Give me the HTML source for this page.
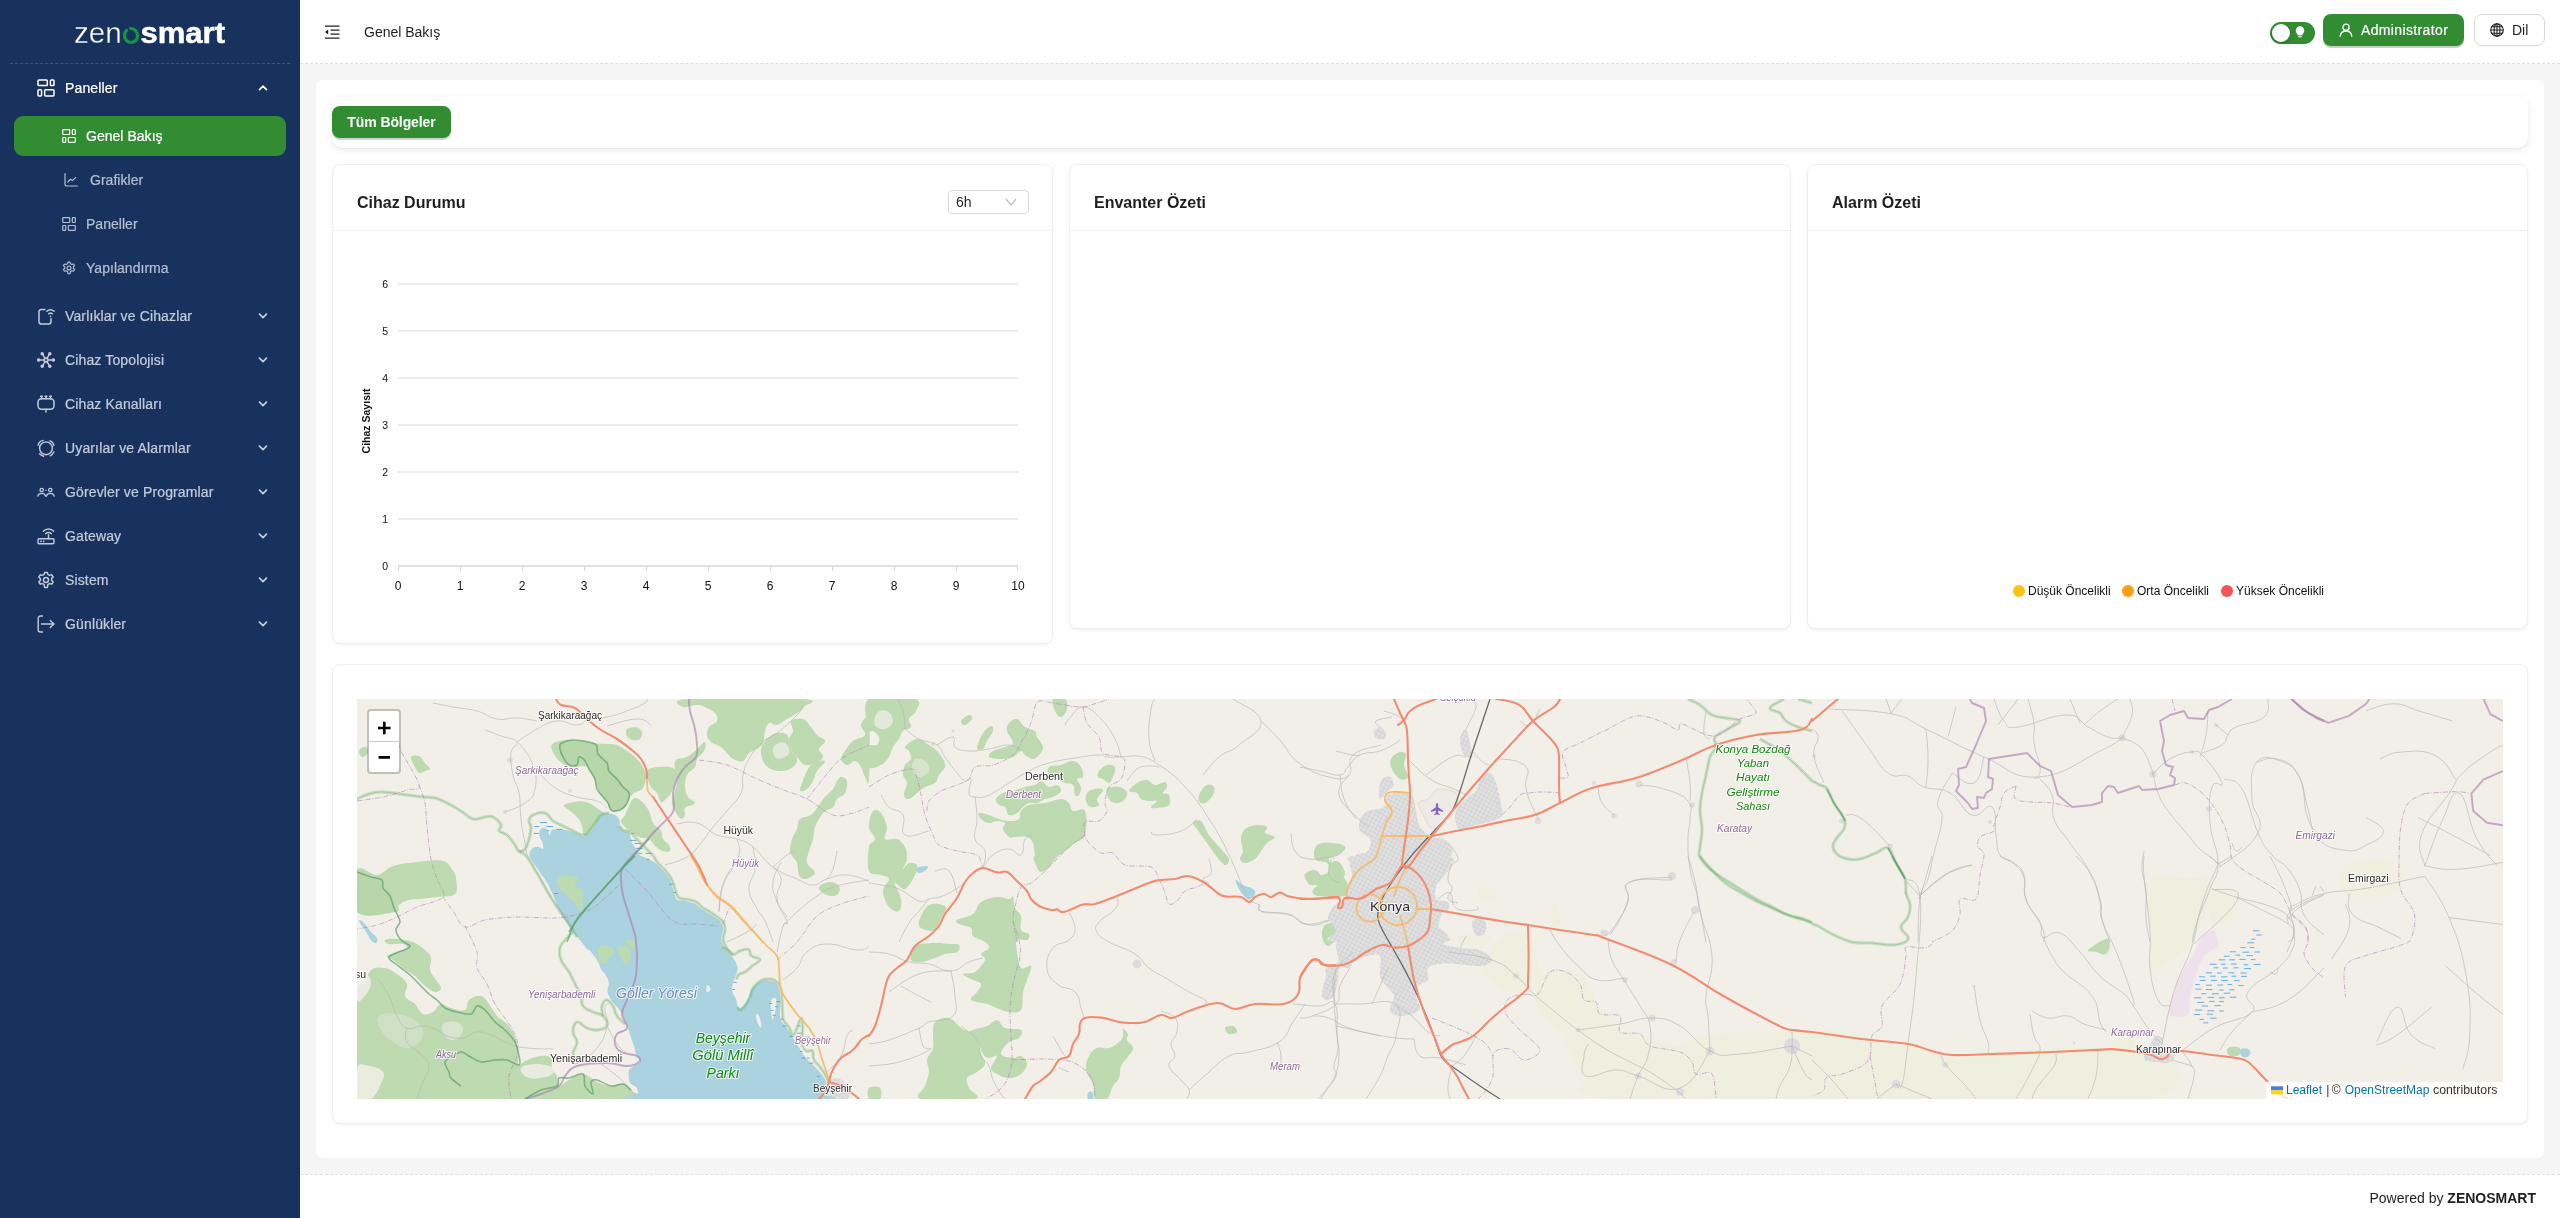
<!DOCTYPE html>
<html lang="tr">
<head>
<meta charset="utf-8">
<title>Genel Bakış</title>
<style>
*{box-sizing:border-box;margin:0;padding:0}
html,body{width:2560px;height:1218px;overflow:hidden;background:#f5f5f5;font-family:"Liberation Sans",sans-serif;color:#1f1f1f;-webkit-font-smoothing:antialiased}
.abs{position:absolute}
/* ---------- sidebar ---------- */
#side{position:absolute;left:0;top:0;width:300px;height:1218px;background:#18325d}
#side .div{position:absolute;left:10px;top:63px;width:280px;height:0;border-top:1px dashed rgba(255,255,255,.16)}
.mi{position:absolute;left:0;width:300px;height:44px;color:#c3cbdb;font-size:14px;line-height:44px;white-space:nowrap}
.mi .tx{position:absolute;left:65px;top:0;letter-spacing:.14px;-webkit-text-stroke:.22px currentColor}
.mi svg.ic{position:absolute;left:37px;top:13px;width:18px;height:18px}
.mi svg.ch{position:absolute;left:258px;top:17px;width:10px;height:10px}
.mi.top1{color:#fff}
.si{position:absolute;left:14px;width:272px;height:40px;border-radius:9px;color:#b5bfd2;font-size:14px;line-height:40px;white-space:nowrap}
.si .tx{position:absolute;left:72px;top:0;letter-spacing:.03px;-webkit-text-stroke:.22px currentColor}
.si svg.ic{position:absolute;left:48px;top:13px;width:14px;height:14px}
.si.act{background:#328c32;color:#fff}
/* ---------- header ---------- */
#hdr{position:absolute;left:300px;top:0;width:2260px;height:64px;background:#fff;border-bottom:1px dashed #dcdcdc}
#ftr{position:absolute;left:300px;top:1174px;width:2260px;height:44px;background:#fff;border-top:1px dashed #e0e0e0}
#content{position:absolute;left:316px;top:80px;width:2228px;height:1078px;background:#fff;border-radius:7px}
.card{position:absolute;background:#fff;border:1px solid #f0f0f0;border-radius:8px;box-shadow:0 1px 2px rgba(0,0,0,.03),0 1px 6px -1px rgba(0,0,0,.02),0 2px 4px rgba(0,0,0,.02)}
.card .hd{position:absolute;left:0;top:0;right:0;height:66px;border-bottom:1px solid #f0f0f0}
.card .tt{position:absolute;left:24px;top:28px;font-size:16px;font-weight:bold;line-height:20px;color:#1f1f1f;white-space:nowrap}
</style>
</head>
<body>
<div id="wrap" style="position:absolute;left:0;top:0;width:2560px;height:1218px;will-change:transform">
<!-- SIDEBAR -->
<div id="side">
  <svg class="abs" style="left:72px;top:18px" width="160" height="32" viewBox="0 0 160 32">
    <text x="2" y="25" font-family="Liberation Sans, sans-serif" font-size="29" fill="#fff" stroke="#18325d" stroke-width=".3" textLength="47.800" lengthAdjust="spacingAndGlyphs">zen</text>
    <ellipse cx="59" cy="17.500" rx="6.500" ry="7" fill="none" stroke="#0c9a42" stroke-width="3.200"/>
    <path d="M54.600 8.500L58.200 14" stroke="#18325d" stroke-width="1.600"/>
    <text x="68.500" y="25" font-family="Liberation Sans, sans-serif" font-size="29" font-weight="bold" fill="#fff" stroke="#fff" stroke-width=".5" textLength="84.500" lengthAdjust="spacingAndGlyphs">smart</text>
  </svg>
  <div class="div"></div>
  <svg width="0" height="0" style="position:absolute">
    <defs>
      <symbol id="i-dash" viewBox="0 0 18 18"><g fill="none" stroke="currentColor" stroke-width="1.500" stroke-linejoin="round"><rect x="1" y="1" width="9.300" height="5.600" rx=".9"/><rect x="13.400" y="1" width="3.600" height="5.600" rx=".9"/><rect x="1" y="10.800" width="3.600" height="6.200" rx=".9"/><rect x="7.700" y="10.800" width="9.300" height="6.200" rx=".9"/></g></symbol>
      <symbol id="i-chd" viewBox="0 0 10 10"><path d="M1.5 3.2 L5 6.6 L8.5 3.2" fill="none" stroke="currentColor" stroke-width="1.7" stroke-linecap="round" stroke-linejoin="round"/></symbol>
      <symbol id="i-chu" viewBox="0 0 10 10"><path d="M1.5 6.6 L5 3.2 L8.5 6.6" fill="none" stroke="currentColor" stroke-width="1.7" stroke-linecap="round" stroke-linejoin="round"/></symbol>
      <symbol id="i-dev" viewBox="0 0 18 18"><g fill="none" stroke="currentColor" stroke-width="1.5" stroke-linecap="round" stroke-linejoin="round"><path d="M8 2.5H4.2A2.2 2.2 0 0 0 2 4.700V14.8A2.2 2.2 0 0 0 4.200 17H11.800A2.2 2.2 0 0 0 14 14.800V11.500"/><path d="M10 4.200A5.5 5.5 0 0 1 17 4.200"/><path d="M11.600 6.800A3 3 0 0 1 15.400 6.800"/><path d="M13.500 9.300V9.400"/></g></symbol>
      <symbol id="i-topo" viewBox="0 0 18 18"><g fill="none" stroke="currentColor" stroke-width="1.4" stroke-linecap="round"><path d="M1.500 9H16.500M5.200 2.600L12.800 15.400M12.800 2.600L5.200 15.400"/></g><g fill="currentColor"><circle cx="1.700" cy="9" r="1.750"/><circle cx="16.300" cy="9" r="1.750"/><circle cx="5.200" cy="2.700" r="1.750"/><circle cx="12.800" cy="2.700" r="1.750"/><circle cx="5.200" cy="15.300" r="1.750"/><circle cx="12.800" cy="15.300" r="1.750"/><circle cx="9" cy="9" r="2.700"/></g><circle cx="9" cy="9" r="1.100" fill="#18325d"/></symbol>
      <symbol id="i-chan" viewBox="0 0 18 18"><g fill="none" stroke="currentColor" stroke-width="1.500" stroke-linecap="round" stroke-linejoin="round"><rect x="1" y="3.800" width="16" height="10.400" rx="3.400"/><path d="M4.500 1.300V3.800M9 1.300V3.800M13.500 1.300V3.800M3.600 1.300H5.400M8.100 1.300H9.900M12.600 1.300H14.400M9 14.200V17"/></g></symbol>
      <symbol id="i-alarm" viewBox="0 0 18 18"><g fill="none" stroke="currentColor" stroke-width="1.400" stroke-linecap="round" stroke-linejoin="round"><circle cx="9" cy="9.300" r="6.400"/><path d="M1.200 6.200A6 6 0 0 1 6 1.400M13 1.800A6 6 0 0 1 16.900 6.500M2.600 14.800A8 8 0 0 0 6.500 17.200M16.800 13A8 8 0 0 1 13.200 16.800"/></g></symbol>
      <symbol id="i-users" viewBox="0 0 18 18"><g fill="none" stroke="currentColor" stroke-width="1.300" stroke-linecap="round" stroke-linejoin="round"><circle cx="4.700" cy="7" r="1.700"/><circle cx="13.300" cy="7" r="1.700"/><path d="M.8 13.200C1.200 11.200 2.700 10.300 4.700 10.300S8.200 11.200 8.600 13.200M9.400 13.200C9.800 11.200 11.300 10.300 13.300 10.300S16.800 11.200 17.200 13.200"/></g><circle cx="9" cy="7.200" r=".8" fill="currentColor"/></symbol>
      <symbol id="i-gw" viewBox="0 0 18 18"><g fill="none" stroke="currentColor" stroke-width="1.400" stroke-linecap="round" stroke-linejoin="round"><rect x="1" y="11.800" width="16" height="5" rx="1.300"/><path d="M11.500 11.800V7.800M6.300 4.300A7 7 0 0 1 16.700 4.300M8.600 6.800A4 4 0 0 1 14.400 6.800"/></g><g fill="currentColor"><circle cx="4" cy="14.300" r=".9"/><circle cx="6.600" cy="14.300" r=".9"/></g></symbol>
      <symbol id="i-gear" viewBox="0 0 18 18"><g fill="none" stroke="currentColor" stroke-width="1.500" stroke-linejoin="round"><path d="M7.600 1H10.400L10.900 3.200L12.600 4.200L14.800 3.500L16.200 5.900L14.600 7.500V9.500L16.200 11.100L14.800 13.500L12.600 12.800L10.900 13.800L10.400 17H7.600L7.100 13.800L5.400 12.800L3.200 13.500L1.800 11.100L3.400 9.500V7.500L1.800 5.900L3.200 3.500L5.400 4.200L7.100 3.200Z" transform="translate(0 0.500) scale(1 .94)"/><circle cx="9" cy="9" r="2.500"/></g></symbol>
      <symbol id="i-log" viewBox="0 0 18 18"><g fill="none" stroke="currentColor" stroke-width="1.400" stroke-linecap="round" stroke-linejoin="round"><path d="M5.500 1H3.500A2.300 2.300 0 0 0 1.200 3.300V14.700A2.300 2.300 0 0 0 3.500 17H5.500M4.500 9H17M13.200 5.600L17 9L13.200 12.400"/></g></symbol>
      <symbol id="i-line" viewBox="0 0 14 14"><g fill="none" stroke="currentColor" stroke-width="1.200" stroke-linecap="round" stroke-linejoin="round"><path d="M1 .6V11A2 2 0 0 0 3 13H13.400M3.800 9L6.500 6.200L8.300 7.600L11.600 4.600"/></g></symbol>
      <symbol id="i-dash14" viewBox="0 0 14 14"><g fill="none" stroke="currentColor" stroke-width="1.200"><rect x=".7" y=".7" width="7" height="4.800" rx=".7"/><rect x="10.300" y=".7" width="3" height="4.800" rx=".7"/><rect x=".7" y="8.500" width="3" height="4.800" rx=".7"/><rect x="6.300" y="8.500" width="7" height="4.800" rx=".7"/></g></symbol>
      <symbol id="i-gear14" viewBox="0 0 18 18"><g fill="none" stroke="currentColor" stroke-width="1.500" stroke-linejoin="round"><path d="M7.600 1H10.400L10.900 3.200L12.600 4.200L14.800 3.500L16.200 5.900L14.600 7.500V9.500L16.200 11.100L14.800 13.500L12.600 12.800L10.900 13.800L10.400 17H7.600L7.100 13.800L5.400 12.800L3.200 13.500L1.800 11.100L3.400 9.500V7.500L1.800 5.900L3.200 3.500L5.400 4.200L7.100 3.200Z" transform="translate(0 0.500) scale(1 .94)"/><circle cx="9" cy="9" r="2.500"/></g></symbol>
    </defs>
  </svg>
  <div class="mi top1" style="top:66px"><svg class="ic"><use href="#i-dash"/></svg><span class="tx">Paneller</span><svg class="ch"><use href="#i-chu"/></svg></div>
  <div class="si act" style="top:116px"><svg class="ic"><use href="#i-dash14"/></svg><span class="tx">Genel Bakış</span></div>
  <div class="si" style="top:160px"><svg class="ic" style="left:50px"><use href="#i-line"/></svg><span class="tx" style="left:76px">Grafikler</span></div>
  <div class="si" style="top:204px"><svg class="ic"><use href="#i-dash14"/></svg><span class="tx">Paneller</span></div>
  <div class="si" style="top:248px"><svg class="ic"><use href="#i-gear14"/></svg><span class="tx">Yapılandırma</span></div>
  <div class="mi" style="top:294px"><svg class="ic"><use href="#i-dev"/></svg><span class="tx">Varlıklar ve Cihazlar</span><svg class="ch"><use href="#i-chd"/></svg></div>
  <div class="mi" style="top:338px"><svg class="ic"><use href="#i-topo"/></svg><span class="tx">Cihaz Topolojisi</span><svg class="ch"><use href="#i-chd"/></svg></div>
  <div class="mi" style="top:382px"><svg class="ic"><use href="#i-chan"/></svg><span class="tx">Cihaz Kanalları</span><svg class="ch"><use href="#i-chd"/></svg></div>
  <div class="mi" style="top:426px"><svg class="ic"><use href="#i-alarm"/></svg><span class="tx">Uyarılar ve Alarmlar</span><svg class="ch"><use href="#i-chd"/></svg></div>
  <div class="mi" style="top:470px"><svg class="ic"><use href="#i-users"/></svg><span class="tx">Görevler ve Programlar</span><svg class="ch"><use href="#i-chd"/></svg></div>
  <div class="mi" style="top:514px"><svg class="ic"><use href="#i-gw"/></svg><span class="tx">Gateway</span><svg class="ch"><use href="#i-chd"/></svg></div>
  <div class="mi" style="top:558px"><svg class="ic"><use href="#i-gear"/></svg><span class="tx">Sistem</span><svg class="ch"><use href="#i-chd"/></svg></div>
  <div class="mi" style="top:602px"><svg class="ic"><use href="#i-log"/></svg><span class="tx">Günlükler</span><svg class="ch"><use href="#i-chd"/></svg></div>
</div>

<!-- HEADER -->
<div id="hdr">
  <svg class="abs" style="left:24px;top:24px" width="17" height="16" viewBox="0 0 17 16"><g fill="none" stroke="#1f1f1f" stroke-width="1.25"><path d="M1 2H15.500M6.500 6H15.500M6.500 10H15.500M1 14H15.500"/></g><path d="M1 8L4.200 5.600V10.400Z" fill="#1f1f1f"/></svg>
  <div class="abs" style="left:64px;top:22px;font-size:14px;line-height:20px;color:#1f1f1f;white-space:nowrap">Genel Bakış</div>
  <!-- toggle -->
  <div class="abs" style="left:1970px;top:22px;width:45px;height:22px;border-radius:11px;background:#328c32">
    <div class="abs" style="left:2px;top:2px;width:18px;height:18px;border-radius:9px;background:#fff;box-shadow:0 2px 4px rgba(0,35,11,.2)"></div>
    <svg class="abs" style="left:25px;top:4px" width="10" height="13" viewBox="0 0 10 13"><path d="M5 .3A4.300 4.300 0 0 0 .7 4.600C.7 6.200 1.600 7.300 2.500 8.200V9.300H7.500V8.200C8.400 7.300 9.300 6.200 9.300 4.600A4.300 4.300 0 0 0 5 .3Z" fill="#fff"/><rect x="2.800" y="10.200" width="4.400" height="1.100" rx=".5" fill="#fff"/></svg>
  </div>
  <!-- administrator -->
  <div class="abs" style="left:2023px;top:14px;width:141px;height:32px;border-radius:8px;background:#328c32;box-shadow:0 2px 0 rgba(40,90,40,.28)">
    <svg class="abs" style="left:16px;top:9px" width="14" height="14" viewBox="0 0 14 14"><g fill="none" stroke="#fff" stroke-width="1.300" stroke-linecap="round"><circle cx="7" cy="4.200" r="3.100"/><path d="M1.200 13.200C1.600 10 3.800 8 7 8S12.400 10 12.800 13.200"/></g></svg>
    <div class="abs" style="left:38px;top:6px;font-size:14px;line-height:20px;color:#fff;white-space:nowrap;letter-spacing:.36px;-webkit-text-stroke:.2px #fff">Administrator</div>
  </div>
  <!-- dil -->
  <div class="abs" style="left:2174px;top:14px;width:71px;height:32px;border-radius:8px;background:#fff;border:1px solid #d9d9d9;box-shadow:0 2px 0 rgba(0,0,0,.02)">
    <svg class="abs" style="left:15px;top:8px" width="14" height="14" viewBox="0 0 14 14"><g fill="none" stroke="#1f1f1f" stroke-width="1.100"><circle cx="7" cy="7" r="6.300"/><ellipse cx="7" cy="7" rx="3" ry="6.300"/><path d="M7 .7V13.300M.7 7H13.300M1.500 3.800H12.500M1.500 10.200H12.500"/></g></svg>
    <div class="abs" style="left:37px;top:5px;font-size:14px;line-height:20px;color:#1f1f1f;white-space:nowrap">Dil</div>
  </div>
</div>

<!-- CONTENT -->
<div id="content"></div>
<!-- filter bar -->
<div class="abs" style="left:332px;top:96px;width:2196px;height:52px;border-radius:10px;background:#fff;box-shadow:0 1px 2px rgba(0,0,0,.06),0 2px 8px rgba(0,0,0,.07)"></div>
<div class="abs" style="left:332px;top:106px;width:119px;height:32px;border-radius:8px;background:#328c32;box-shadow:0 2px 0 rgba(0,0,0,.18);color:#fff;font-size:14px;font-weight:bold;line-height:32px;text-align:center;white-space:nowrap;letter-spacing:-.1px">Tüm Bölgeler</div>

<!-- card 1 -->
<div class="card" style="left:332px;top:164px;width:721px;height:480px">
  <div class="hd"></div>
  <div class="tt">Cihaz Durumu</div>
  <div class="abs" style="left:615px;top:25px;width:81px;height:24px;border:1px solid #d9d9d9;border-radius:4px;background:#fff">
    <div class="abs" style="left:7px;top:1px;font-size:14px;line-height:20px;color:#1f1f1f">6h</div>
    <svg class="abs" style="left:56px;top:6px" width="12" height="10" viewBox="0 0 12 10"><path d="M1 2L6 8L11 2" fill="none" stroke="#bfbfbf" stroke-width="1.200"/></svg>
  </div>
  <svg class="abs" style="left:0;top:66px" width="719" height="412" viewBox="333 231 719 412" font-family="Liberation Sans, sans-serif">
    <g stroke="#e8e8e8" stroke-width="1.500">
      <path d="M398 284H1018M398 331H1018M398 378H1018M398 425H1018M398 472H1018M398 519H1018"/>
    </g>
    <g stroke="#d9d9d9" stroke-width="1.500">
      <path d="M398 566H1018"/>
      <path d="M398.500 566V571M460.500 566V571M522.500 566V571M584.500 566V571M646.500 566V571M708.500 566V571M770.500 566V571M832.500 566V571M894.500 566V571M956.500 566V571M1017.500 566V571" stroke-width="1"/>
    </g>
    <g font-size="10.500" fill="#111" text-anchor="end">
      <text x="388" y="288">6</text><text x="388" y="335">5</text><text x="388" y="382">4</text><text x="388" y="429">3</text><text x="388" y="476">2</text><text x="388" y="523">1</text><text x="388" y="570">0</text>
    </g>
    <g font-size="12" fill="#111" text-anchor="middle">
      <text x="398" y="590">0</text><text x="460" y="590">1</text><text x="522" y="590">2</text><text x="584" y="590">3</text><text x="646" y="590">4</text><text x="708" y="590">5</text><text x="770" y="590">6</text><text x="832" y="590">7</text><text x="894" y="590">8</text><text x="956" y="590">9</text><text x="1018" y="590">10</text>
    </g>
    <text transform="translate(370 421) rotate(-90)" font-size="10.500" font-weight="bold" fill="#111" text-anchor="middle">Cihaz Sayısıt</text>
  </svg>
</div>

<!-- card 2 -->
<div class="card" style="left:1069px;top:164px;width:722px;height:465px">
  <div class="hd"></div>
  <div class="tt" style="left:24px">Envanter Özeti</div>
</div>

<!-- card 3 -->
<div class="card" style="left:1807px;top:164px;width:721px;height:465px">
  <div class="hd"></div>
  <div class="tt" style="left:24px">Alarm Özeti</div>
  <div class="abs" style="left:205px;top:420px;width:12px;height:12px;border-radius:6px;background:#fcc419"></div>
  <div class="abs" style="left:220px;top:418px;font-size:12px;line-height:16px;color:#111;white-space:nowrap">Düşük Öncelikli</div>
  <div class="abs" style="left:314px;top:420px;width:12px;height:12px;border-radius:6px;background:#ff9f0a"></div>
  <div class="abs" style="left:329px;top:418px;font-size:12px;line-height:16px;color:#111;white-space:nowrap">Orta Öncelikli</div>
  <div class="abs" style="left:413px;top:420px;width:12px;height:12px;border-radius:6px;background:#fa5252"></div>
  <div class="abs" style="left:428px;top:418px;font-size:12px;line-height:16px;color:#111;white-space:nowrap">Yüksek Öncelikli</div>
</div>

<!-- map card -->
<div class="card" style="left:332px;top:664px;width:2196px;height:460px">
  <div id="map" class="abs" style="left:24px;top:34px;width:2146px;height:400px;background:#f2efe9;overflow:hidden">
<svg width="2146" height="400" viewBox="0 0 2146 400" style="position:absolute;left:0;top:0" font-family="Liberation Sans, sans-serif">
<rect width="2146" height="400" fill="#f2efe9"/>
<g fill="#eef0d8" opacity=".5"><path d="M1127,267C1128.2,257.4 1136.2,243 1145,237C1153.8,231 1163.4,230.6 1171,237C1178.6,243.4 1180.6,259.4 1183,269C1185.4,278.6 1187,279.8 1183,285C1179,290.2 1171.8,295 1163,295C1154.2,295 1146.2,290.6 1139,285C1131.8,279.4 1125.8,276.6 1127,267Z"/><path d="M1183,277C1191,270.6 1208.6,269.8 1219,273C1229.4,276.2 1230.2,285.8 1235,293C1239.8,300.2 1237.4,304.2 1243,309C1248.6,313.8 1259,312.2 1263,317C1267,321.8 1271,329 1263,333C1255,337 1235.8,337.8 1223,337C1210.2,336.2 1207.8,335.4 1199,329C1190.2,322.6 1182.2,315.4 1179,305C1175.8,294.6 1175,283.4 1183,277Z"/><path d="M1211,337C1220.6,332.2 1246.6,332.2 1263,333C1279.4,333.8 1281,338.2 1293,341C1305,343.8 1313,347.8 1323,347C1333,346.2 1327,339.8 1343,337C1359,334.2 1380.6,333 1403,333C1425.4,333 1444.6,323.6 1455,337C1465.4,350.4 1496.6,387.4 1455,400C1413.4,412.6 1292.6,404.6 1247,400C1201.4,395.4 1233.4,385.6 1227,377C1220.6,368.4 1218.2,365 1215,357C1211.8,349 1201.4,341.8 1211,337Z"/><path d="M1103,237C1107.8,234.6 1125.4,233.8 1131,235C1136.6,236.2 1135.8,240.6 1131,243C1126.2,245.4 1112.6,248.2 1107,247C1101.4,245.8 1098.2,239.4 1103,237Z"/><path d="M1123,190C1125.8,188 1134.2,188 1137,190C1139.8,192 1139.8,198 1137,200C1134.2,202 1125.8,202 1123,200C1120.2,198 1120.2,192 1123,190Z"/><path d="M1195,205C1196,201 1198.4,201 1200,205C1201.6,209 1204,221 1203,225C1202,229 1196.6,229 1195,225C1193.4,221 1194,209 1195,205Z"/><path d="M1455,335C1474.2,324.2 1523,341.6 1551,346C1579,350.4 1583.4,352.8 1595,357C1606.6,361.2 1606.6,358.4 1609,367C1611.4,375.6 1637.8,393.4 1607,400C1576.2,406.6 1485.4,413 1455,400C1424.6,387 1435.8,345.8 1455,335Z"/><path d="M1609,357C1646.2,347.8 1757.8,345.4 1795,354C1832.2,362.6 1832.2,390.8 1795,400C1757.8,409.2 1646.2,408.6 1609,400C1571.8,391.4 1571.8,366.2 1609,357Z"/><path d="M1791,183C1797.4,171.4 1812.2,179 1825,179C1837.8,179 1850.6,175.4 1855,183C1859.4,190.6 1851,205.4 1847,217C1843,228.6 1841.4,232.2 1835,241C1828.6,249.8 1823,255.4 1815,261C1807,266.6 1799.4,273.8 1795,269C1790.6,264.2 1793.8,254.2 1793,237C1792.2,219.8 1784.6,194.6 1791,183Z"/><path d="M1853,191C1858.2,185.4 1876.6,191.8 1881,197C1885.4,202.2 1880.2,211.4 1875,217C1869.8,222.6 1859.4,230.2 1855,225C1850.6,219.8 1847.8,196.6 1853,191Z"/><path d="M1988.5,166.9C1997.5,160.7 2026.5,158.6 2036.8,163.4C2047.1,168.2 2049.2,184.8 2040.2,191C2031.2,197.2 2002.3,199.2 1992,194.4C1981.7,189.6 1979.5,173.1 1988.5,166.9Z"/><path d="M1757,341C1760.2,338.6 1771,336.4 1775,338C1779,339.6 1780.2,346.6 1777,349C1773.8,351.4 1763,351.6 1759,350C1755,348.4 1753.8,343.4 1757,341Z"/></g>
<g fill="#bddab1"><path d="M195,45.6C197.4,42.5 203.8,41.2 212,41C220.2,40.8 231.6,43.6 240,44.4C248.4,45.2 252.5,44.2 258,45.6C263.5,47 266,49.4 270,52C274,54.6 276.9,56.7 280,60C283.1,63.3 285.4,66.3 287,70C288.6,73.7 289.4,76.3 289,80C288.6,83.7 287.2,87.4 285,90C282.8,92.6 279.4,92.2 277,94C274.6,95.8 273.6,97.2 272,100C270.4,102.8 270.4,106.7 268,109C265.6,111.3 261.8,112 259,112.4C256.2,112.8 254.7,112.7 253,111C251.3,109.3 251.8,106.1 250,103C248.2,99.9 245.2,97.8 243,94C240.8,90.2 240,86.4 238,82C236,77.6 234.2,72.8 232,70C229.8,67.2 228.6,67.4 226,67C223.4,66.6 221.3,68.2 218,68C214.7,67.8 211.5,67.8 208,66C204.5,64.2 201.4,61.7 199,58C196.6,54.3 192.6,48.7 195,45.6Z"/><path d="M270,30C271.8,28.4 277.2,27.8 280,28.4C282.8,28.9 284.4,30.9 285,33C285.6,35.1 284.6,38.5 283,40C281.4,41.5 278.4,41.5 276,41C273.6,40.5 271.1,39 270,37C268.9,35 268.2,31.6 270,30Z"/><path d="M292,70C295.9,67.8 306.9,67.3 312,68C317.1,68.7 318.9,71.1 320,74C321.1,76.9 319.1,80.3 318,84C316.9,87.7 315.6,91.1 314,94C312.4,96.9 310.8,98.3 309,100C307.2,101.7 305.6,104.1 304,103C302.4,101.9 301.8,96.8 300,94C298.2,91.2 295.6,90.6 294,88C292.4,85.4 291.4,83.3 291,80C290.6,76.7 288.1,72.2 292,70Z"/><path d="M348,43C349.3,43.4 348.5,48.9 347,52C345.5,55.1 341.6,57.1 340,60C338.4,62.9 339.8,65.1 338,68C336.2,70.9 331.8,72.3 330,76C328.2,79.7 327.8,84 328,88C328.2,92 329.2,95.1 331,98C332.8,100.9 338.6,102 338,104C337.4,106 329.8,106.8 328,109C326.2,111.2 328.7,114 328,116C327.3,118 325.8,120.7 324,120C322.2,119.3 319.6,114.9 318,112C316.4,109.1 315,107.7 315,104C315,100.3 317.1,96.4 318,92C318.9,87.6 320,84 320,80C320,76 318.2,73.5 318,70C317.8,66.5 316.8,63.2 319,61C321.2,58.8 326.1,60 330,58C333.9,56 336.7,52.8 340,50C343.3,47.2 346.7,42.6 348,43Z"/><path d="M207,106C208.5,104.4 215.4,102.8 220,102.4C224.6,102 227.6,102.2 232,104C236.4,105.8 241.1,110 244,112C246.9,114 249.1,112.8 248,115C246.9,117.2 240.9,120.2 238,124C235.1,127.8 234,133.8 232,136C230,138.2 228.5,138.2 227,136C225.5,133.8 225.7,127.7 224,124C222.3,120.3 220.2,118.4 218,116C215.8,113.6 214,112.8 212,111C210,109.2 205.5,107.6 207,106Z"/><path d="M268,116C270.2,112 273.1,102.6 276,100C278.9,97.4 281.1,99.8 284,102C286.9,104.2 289.8,108 292,112C294.2,116 293.8,120.3 296,124C298.2,127.7 302.2,129.1 304,132C305.8,134.9 304.5,137.4 306,140C307.5,142.6 310.7,143.8 312,146C313.3,148.2 314.1,150.9 313,152C311.9,153.1 308.8,152.9 306,152C303.2,151.1 300.6,149.2 298,147C295.4,144.8 294.9,141.7 292,140C289.1,138.3 285.3,139.5 282,138C278.7,136.5 276.6,133.8 274,132C271.4,130.2 269.8,129.8 268,128C266.2,126.2 264,124.2 264,122C264,119.8 265.8,120 268,116Z"/><path d="M326,8C324.5,6.9 310,1.5 332,0C354,-1.5 424.9,-1.5 446,0C467.1,1.5 448.1,5.4 447,8C445.9,10.6 443.1,11.8 440,14C436.9,16.2 433.7,17.8 430,20C426.3,22.2 423.3,25.3 420,26C416.7,26.7 414.2,22.9 412,24C409.8,25.1 409.1,28.3 408,32C406.9,35.7 407.5,40.7 406,44C404.5,47.3 402.6,48.2 400,50C397.4,51.8 394.6,51.8 392,54C389.4,56.2 388.9,60.9 386,62C383.1,63.1 378.9,61.5 376,60C373.1,58.5 372.2,56.2 370,54C367.8,51.8 366.9,50 364,48C361.1,46 356.6,45.2 354,43C351.4,40.8 350.4,38.8 350,36C349.6,33.2 350.2,30.6 352,28C353.8,25.4 358.9,24.6 360,22C361.1,19.4 360.2,16.6 358,14C355.8,11.4 351.3,9.5 348,8C344.7,6.5 344,6 340,6C336,6 327.5,9.1 326,8Z"/><path d="M434,22C435.8,19.8 442.3,18.9 446,20C449.7,21.1 451.4,25.1 454,28C456.6,30.9 457.4,33.4 460,36C462.6,38.6 467.6,39.4 468,42C468.4,44.6 462.4,47.1 462,50C461.6,52.9 466.7,55.4 466,58C465.3,60.6 461.3,62.5 458,64C454.7,65.5 451.3,67.1 448,66C444.7,64.9 442.6,60.9 440,58C437.4,55.1 435.5,53.3 434,50C432.5,46.7 431.6,43.3 432,40C432.4,36.7 435.6,35.3 436,32C436.4,28.7 432.2,24.2 434,22Z"/><path d="M412,38C414.2,36.5 416.7,34.4 420,34C423.3,33.6 427.4,33.1 430,36C432.6,38.9 432.2,45.6 434,50C435.8,54.4 439.6,56.7 440,60C440.4,63.3 438.6,65.8 436,68C433.4,70.2 430,71.6 426,72C422,72.4 417.7,71.8 414,70C410.3,68.2 407.8,65.7 406,62C404.2,58.3 403.6,53.7 404,50C404.4,46.3 406.5,44.2 408,42C409.5,39.8 409.8,39.5 412,38Z"/><path d="M512,22C510.5,12.1 504.7,23.4 504,26C503.3,28.6 509.5,33.1 508,36C506.5,38.9 499.7,39.1 496,42C492.3,44.9 490.2,48.7 488,52C485.8,55.3 483.6,57.4 484,60C484.4,62.6 487.4,65.6 490,66C492.6,66.4 495.4,61.6 498,62C500.6,62.4 502.2,65.1 504,68C505.8,70.9 506.5,75.8 508,78C509.5,80.2 511.3,90.3 512,80C512.7,69.7 513.5,31.9 512,22Z"/><path d="M468,63C467.6,64.8 462.2,68.5 460,72C457.8,75.5 457.8,78.7 456,82C454.2,85.3 452.4,88.2 450,90C447.6,91.8 443.9,93.1 443,92C442.1,90.9 443.9,87.3 445,84C446.1,80.7 447.4,77.3 449,74C450.6,70.7 451.6,68.2 454,66C456.4,63.8 459.4,62.5 462,62C464.6,61.5 468.4,61.2 468,63Z"/><path d="M484,78C485.8,78 489.3,79.1 490,82C490.7,84.9 489.8,90.7 488,94C486.2,97.3 482.2,97.4 480,100C477.8,102.6 478.2,105.8 476,108C473.8,110.2 470.6,109.8 468,112C465.4,114.2 463.8,117.1 462,120C460.2,122.9 459.1,124.3 458,128C456.9,131.7 457.1,135.6 456,140C454.9,144.4 453.1,147.6 452,152C450.9,156.4 448.9,160 450,164C451.1,168 458.4,171.1 458,174C457.6,176.9 450.9,179.6 448,180C445.1,180.4 443.5,178.9 442,176C440.5,173.1 441.1,167.3 440,164C438.9,160.7 437.3,160.2 436,158C434.7,155.8 433.2,155.3 433,152C432.8,148.7 433.7,144 435,140C436.3,136 438.5,133.7 440,130C441.5,126.3 440.4,122.6 443,120C445.6,117.4 450.5,118.6 454,116C457.5,113.4 459.4,109.3 462,106C464.6,102.7 465.4,100.9 468,98C470.6,95.1 473.8,92.9 476,90C478.2,87.1 478.5,84.2 480,82C481.5,79.8 482.2,78 484,78Z"/><path d="M462,188C463.1,186 468.3,183.2 472,183C475.7,182.8 480.4,184.8 482,187C483.6,189.2 482.5,193.2 481,195C479.5,196.8 476.8,197.2 474,197C471.2,196.8 468.2,195.7 466,194C463.8,192.3 460.9,190 462,188Z"/><path d="M54,58C54.9,56.4 59.4,55.9 62,57C64.6,58.1 66,61.6 68,64C70,66.4 73,68.5 73,70C73,71.5 70,71.3 68,72C66,72.7 64,75.1 62,74C60,72.9 58.5,68.9 57,66C55.5,63.1 53.1,59.6 54,58Z"/><path d="M3,50C4.2,48.7 7.5,47.3 9,48C10.5,48.7 11.6,52.2 11,54C10.4,55.8 7.6,57.8 6,58C4.4,58.2 3,56.5 2.4,55C1.8,53.5 1.8,51.3 3,50Z"/><path d="M0,171C3.7,164.2 13.4,176.7 20,176C26.6,175.3 28.7,169.4 36,167C43.3,164.6 50.8,163.9 60,163C69.2,162.1 79.4,160.3 86,162C92.6,163.7 93.6,168.7 96,172C98.4,175.3 98.6,175.8 99,180C99.4,184.2 101.5,191.7 98,195C94.5,198.3 86.2,197.1 80,198C73.8,198.9 69.1,199.4 64,200C58.9,200.6 56,199.9 52,201C48,202.1 44.6,203.8 42,206C39.4,208.2 45.7,211.7 38,213C30.3,214.3 7,220.7 0,213C-7,205.3 -3.7,177.8 0,171Z"/><path d="M28,241C29.5,240.1 34.9,239.6 40,240C45.1,240.4 50.9,241 56,243C61.1,245 64.7,248.1 68,251C71.3,253.9 73.1,255.3 74,259C74.9,262.7 72.1,267 73,271C73.9,275 77,277.7 79,281C81,284.3 84.2,286.8 84,289C83.8,291.2 80.9,293.4 78,293C75.1,292.6 71.7,289.9 68,287C64.3,284.1 62,280.3 58,277C54,273.7 50,271.9 46,269C42,266.1 38.9,263.2 36,261C33.1,258.8 29.3,258.5 30,257C30.7,255.5 36.3,254.5 40,253C43.7,251.5 48.9,250.5 50,249C51.1,247.5 49.3,245.7 46,245C42.7,244.3 35.3,245.7 32,245C28.7,244.3 26.5,241.9 28,241Z"/><path d="M14,271C17.7,268.1 23.2,268.3 28,269C32.8,269.7 36,272.1 40,275C44,277.9 48.5,281 50,285C51.5,289 46.5,293.3 48,297C49.5,300.7 54.7,301.7 58,305C61.3,308.3 62.7,313.5 66,315C69.3,316.5 72.7,314.8 76,313C79.3,311.2 80.7,305.7 84,305C87.3,304.3 89.6,307.9 94,309C98.4,310.1 104.7,312.5 108,311C111.3,309.5 109.1,303.6 112,301C114.9,298.4 120.3,296.3 124,297C127.7,297.7 129.1,301.3 132,305C134.9,308.7 137.1,313.7 140,317C142.9,320.3 145.1,320.1 148,323C150.9,325.9 153.8,329 156,333C158.2,337 159.1,340.2 160,345C160.9,349.8 160.6,355.1 161,359C161.4,362.9 160.3,365.6 162,366C163.7,366.4 166,362.6 170,361C174,359.4 179.6,357.4 184,357C188.4,356.6 192,356.8 194,359C196,361.2 193.9,365.7 195,369C196.1,372.3 198.7,373.7 200,377C201.3,380.3 199.8,386.3 202,387C204.2,387.7 207.6,383.2 212,381C216.4,378.8 220.9,374.6 226,375C231.1,375.4 235.2,380.8 240,383C244.8,385.2 247.2,386.6 252,387C256.8,387.4 261.6,383.9 266,385C270.4,386.1 273.4,390.2 276,393C278.6,395.8 330.6,398.7 280,400C229.4,401.3 51.3,418.9 0,400C-51.3,381.1 -1.5,318.1 0,297C1.5,275.9 5.4,289.8 8,285C10.6,280.2 10.3,273.9 14,271Z"/><path d="M512,0C520.4,-5.5 549.4,-2.2 558,0C566.6,2.2 560.1,8.3 559,12C557.9,15.7 552.9,17.1 552,20C551.1,22.9 555.1,25.8 554,28C552.9,30.2 548.2,29.8 546,32C543.8,34.2 543.8,37.1 542,40C540.2,42.9 537.8,44.7 536,48C534.2,51.3 534.2,54.7 532,58C529.8,61.3 527.7,64.2 524,66C520.3,67.8 514.2,71.3 512,68C509.8,64.7 510.5,52 512,48C513.5,44 518.2,47.8 520,46C521.8,44.2 522.7,40.6 522,38C521.3,35.4 517.8,33.5 516,32C514.2,30.5 512.7,35.9 512,30C511.3,24.1 503.6,5.5 512,0Z"/><path d="M560,40C564.4,39.6 568.3,43.8 572,46C575.7,48.2 577.4,49.4 580,52C582.6,54.6 584.5,57.1 586,60C587.5,62.9 588.7,65.1 588,68C587.3,70.9 583.8,73.1 582,76C580.2,78.9 580.6,81.8 578,84C575.4,86.2 571.3,86.2 568,88C564.7,89.8 562.9,91.8 560,94C557.1,96.2 554.4,99.6 552,100C549.6,100.4 547.4,98.9 547,96C546.6,93.1 550.2,87.7 550,84C549.8,80.3 546.4,79.3 546,76C545.6,72.7 546.5,68.9 548,66C549.5,63.1 553.3,62.6 554,60C554.7,57.4 553.1,54.2 552,52C550.9,49.8 546.5,50.2 548,48C549.5,45.8 555.6,40.4 560,40Z"/><path d="M604,22C604.7,20.2 610,16.4 612,16C614,15.6 615.7,18.2 615,20C614.3,21.8 610,25.6 608,26C606,26.4 603.3,23.8 604,22Z"/><path d="M620,49C620,46.1 623.4,38 626,34C628.6,30 632.2,27.4 634,27C635.8,26.6 636.7,29.2 636,32C635.3,34.8 631.8,38.7 630,42C628.2,45.3 627.8,48.7 626,50C624.2,51.3 620,51.9 620,49Z"/><path d="M652,24C653.8,21.8 657.1,19.3 660,20C662.9,20.7 664.7,25.8 668,28C671.3,30.2 675.8,30.2 678,32C680.2,33.8 678.5,35.1 680,38C681.5,40.9 685.6,44.7 686,48C686.4,51.3 683.8,53.8 682,56C680.2,58.2 678.6,60 676,60C673.4,60 670.2,57.5 668,56C665.8,54.5 666.2,51.6 664,52C661.8,52.4 659.7,56.5 656,58C652.3,59.5 648.4,60 644,60C639.6,60 633.5,59.5 632,58C630.5,56.5 633.1,53.8 636,52C638.9,50.2 644.3,49.5 648,48C651.7,46.5 655.6,46.9 656,44C656.4,41.1 650.7,35.7 650,32C649.3,28.3 650.2,26.2 652,24Z"/><path d="M696,0C697.8,-2.2 705.4,-1.8 708,0C710.6,1.8 710.7,6.7 710,10C709.3,13.3 706.2,17.6 704,18C701.8,18.4 699.5,15.3 698,12C696.5,8.7 694.2,2.2 696,0Z"/><path d="M664,112C665.8,109.4 667.6,107.5 672,106C676.4,104.5 682.1,105.1 688,104C693.9,102.9 699.6,100 704,100C708.4,100 709.8,101.8 712,104C714.2,106.2 713.1,110.5 716,112C718.9,113.5 725.8,107.6 728,112C730.2,116.4 729.8,130.1 728,136C726.2,141.9 721.7,141.1 718,144C714.3,146.9 711.3,149.4 708,152C704.7,154.6 702.9,155.1 700,158C697.1,160.9 694.6,165.4 692,168C689.4,170.6 687.8,172.4 686,172C684.2,171.6 683.5,168.9 682,166C680.5,163.1 679.1,160 678,156C676.9,152 677.5,147.3 676,144C674.5,140.7 673.3,139.1 670,138C666.7,136.9 661.3,138 658,138C654.7,138 654.2,139.5 652,138C649.8,136.5 646.7,132.6 646,130C645.3,127.4 649.1,125.5 648,124C646.9,122.5 642.9,122 640,122C637.1,122 634.9,124.4 632,124C629.1,123.6 625.8,121.8 624,120C622.2,118.2 620.5,114.7 622,114C623.5,113.3 628.3,114.9 632,116C635.7,117.1 638.3,118.9 642,120C645.7,121.1 648.3,122 652,122C655.7,122 659.8,121.8 662,120C664.2,118.2 662.2,114.6 664,112Z"/><path d="M639,100C639.7,97.8 642.9,95.5 646,94C649.1,92.5 652,93.1 656,92C660,90.9 664,89.1 668,88C672,86.9 675.1,87.1 678,86C680.9,84.9 681.4,81.6 684,82C686.6,82.4 689.1,87.3 692,88C694.9,88.7 697.8,85.3 700,86C702.2,86.7 704.7,89.8 704,92C703.3,94.2 698.9,96.5 696,98C693.1,99.5 690.9,98.9 688,100C685.1,101.1 682.9,103.3 680,104C677.1,104.7 674.6,103.3 672,104C669.4,104.7 668.2,106.2 666,108C663.8,109.8 662.6,112.5 660,114C657.4,115.5 654.2,117.1 652,116C649.8,114.9 649.8,109.8 648,108C646.2,106.2 643.6,107.5 642,106C640.4,104.5 638.3,102.2 639,100Z"/><path d="M692,68C694.2,66.2 699.6,67.1 704,66C708.4,64.9 712.3,61.6 716,62C719.7,62.4 722.2,65.1 724,68C725.8,70.9 726.7,75.8 726,78C725.3,80.2 720.4,78.2 720,80C719.6,81.8 723.6,85.1 724,88C724.4,90.9 723.1,94.5 722,96C720.9,97.5 719.1,97.8 718,96C716.9,94.2 717.8,88.2 716,86C714.2,83.8 710.9,85.1 708,84C705.1,82.9 702.9,81.5 700,80C697.1,78.5 693.5,78.2 692,76C690.5,73.8 689.8,69.8 692,68Z"/><path d="M742,72C743.6,69.8 747.1,66.7 750,66C752.9,65.3 756.9,65.8 758,68C759.1,70.2 757.1,75.1 756,78C754.9,80.9 753.8,83.6 752,84C750.2,84.4 748,81.1 746,80C744,78.9 741.7,79.5 741,78C740.3,76.5 740.4,74.2 742,72Z"/><path d="M730,94C731.6,91.8 735.1,90.5 738,90C740.9,89.5 745.6,89.2 746,91C746.4,92.8 740.7,97.2 740,100C739.3,102.8 743.1,104.5 742,106C740.9,107.5 736.4,108.7 734,108C731.6,107.3 729.7,104.6 729,102C728.3,99.4 728.4,96.2 730,94Z"/><path d="M750,90C751.8,87.8 758.3,87.3 762,88C765.7,88.7 769.3,91.4 770,94C770.7,96.6 768.2,100.2 766,102C763.8,103.8 760.6,104.4 758,104C755.4,103.6 753.5,102.6 752,100C750.5,97.4 748.2,92.2 750,90Z"/><path d="M780,84C783.3,82 786.7,80.6 790,81C793.3,81.4 794.7,85.6 798,86C801.3,86.4 805.8,82.6 808,83C810.2,83.4 810.4,86 810,88C809.6,90 805.6,92.5 806,94C806.4,95.5 810.9,93.8 812,96C813.1,98.2 814.2,103.6 812,106C809.8,108.4 803.3,108.6 800,109C796.7,109.4 794,109.3 794,108C794,106.7 800.4,103.1 800,102C799.6,100.9 794.9,102.4 792,102C789.1,101.6 786.2,101.5 784,100C781.8,98.5 782.2,95.5 780,94C777.8,92.5 772,93.8 772,92C772,90.2 776.7,86 780,84Z"/><path d="M850,86C852.6,84.9 855.9,86.2 857,88C858.1,89.8 857.6,93.1 856,96C854.4,98.9 850.6,102.9 848,104C845.4,105.1 842.9,103.8 842,102C841.1,100.2 841.5,96.9 843,94C844.5,91.1 847.4,87.1 850,86Z"/><path d="M888,130C890.9,127.4 896,126.4 900,126C904,125.6 908.5,126.5 910,128C911.5,129.5 906.5,132.2 908,134C909.5,135.8 917.6,136.2 918,138C918.4,139.8 912.6,141.4 910,144C907.4,146.6 906.2,149.1 904,152C901.8,154.9 900.9,157.8 898,160C895.1,162.2 890.8,164 888,164C885.2,164 883.4,162.2 883,160C882.6,157.8 885.8,155.7 886,152C886.2,148.3 883.6,144 884,140C884.4,136 885.1,132.6 888,130Z"/><path d="M836,124C836.7,122.5 841.1,119.8 844,122C846.9,124.2 848.3,130.9 852,136C855.7,141.1 860.3,145.6 864,150C867.7,154.4 871.3,157.1 872,160C872.7,162.9 870.2,166.4 868,166C865.8,165.6 863.3,162 860,158C856.7,154 853.7,149.1 850,144C846.3,138.9 842.6,133.7 840,130C837.4,126.3 835.3,125.5 836,124Z"/><path d="M516,112C518.2,109.4 521.4,111.1 524,114C526.6,116.9 529.3,123.2 530,128C530.7,132.8 526.2,137.8 528,140C529.8,142.2 536.3,138.5 540,140C543.7,141.5 546.2,144.3 548,148C549.8,151.7 550.4,156 550,160C549.6,164 545.6,169.3 546,170C546.4,170.7 549.4,164.7 552,164C554.6,163.3 558.9,163.8 560,166C561.1,168.2 560.2,171.6 558,176C555.8,180.4 551.7,188.5 548,190C544.3,191.5 538.7,182.2 538,184C537.3,185.8 543.3,194.9 544,200C544.7,205.1 544.2,210.5 542,212C539.8,213.5 534.9,211.7 532,208C529.1,204.3 526,197.1 526,192C526,186.9 532.4,182.9 532,180C531.6,177.1 527.7,177.5 524,176C520.3,174.5 514.2,177.1 512,172C509.8,166.9 510.9,153.9 512,148C513.1,142.1 518,143.7 518,140C518,136.3 512.4,133.1 512,128C511.6,122.9 513.8,114.6 516,112Z"/><path d="M960,146C963.3,143.1 970.9,143.6 976,144C981.1,144.4 986.9,145.8 988,148C989.1,150.2 984.9,153.8 982,156C979.1,158.2 972.7,157.4 972,160C971.3,162.6 975.1,166.3 978,170C980.9,173.7 985.8,176.7 988,180C990.2,183.3 991.8,185.1 990,188C988.2,190.9 983.9,194.5 978,196C972.1,197.5 960.6,197.5 958,196C955.4,194.5 965.1,190.2 964,188C962.9,185.8 954.9,186.2 952,184C949.1,181.8 947.6,178.2 948,176C948.4,173.8 951.1,172 954,172C956.9,172 960.7,176 964,176C967.3,176 970.9,174.2 972,172C973.1,169.8 972.6,166.2 970,164C967.4,161.8 959.8,163.3 958,160C956.2,156.7 956.7,148.9 960,146Z"/><path d="M600,221C602.6,219.2 611.6,218.3 616,215C620.4,211.7 619.6,206.1 624,203C628.4,199.9 634.9,198.6 640,198C645.1,197.4 649.1,200 652,200C654.9,200 654.9,196.3 656,198C657.1,199.7 656.5,205.5 658,209C659.5,212.5 662.9,213 664,217C665.1,221 662.5,227.7 664,231C665.5,234.3 670.9,233.2 672,235C673.1,236.8 672.2,239.9 670,241C667.8,242.1 661.8,238.8 660,241C658.2,243.2 659.3,247.9 660,253C660.7,258.1 661.4,266.4 664,269C666.6,271.6 672.9,264.8 674,267C675.1,269.2 671.5,276.2 670,281C668.5,285.8 667.1,287.5 666,293C664.9,298.5 666.6,307.3 664,311C661.4,314.7 656.4,313.4 652,313C647.6,312.6 644,310.5 640,309C636,307.5 634.8,306.5 630,305C625.2,303.5 615.8,303.2 614,301C612.2,298.8 618.2,295.9 620,293C621.8,290.1 624.7,287.2 624,285C623.3,282.8 619.3,282.8 616,281C612.7,279.2 605.6,276.5 606,275C606.4,273.5 614,275.6 618,273C622,270.4 626.9,264.3 628,261C629.1,257.7 623.3,257.2 624,255C624.7,252.8 631.3,251.2 632,249C632.7,246.8 630.9,245.2 628,243C625.1,240.8 618.6,239.6 616,237C613.4,234.4 616.6,231.2 614,229C611.4,226.8 604.6,226.5 602,225C599.4,223.5 597.4,222.8 600,221Z"/><path d="M558,247C562.4,243.9 571.8,244.4 578,244C584.2,243.6 587.6,244.6 592,245C596.4,245.4 600.5,244.5 602,246C603.5,247.5 602.6,251.3 600,253C597.4,254.7 592,253.9 588,255C584,256.1 582.4,257.5 578,259C573.6,260.5 568.4,262.6 564,263C559.6,263.4 555.1,263.9 554,261C552.9,258.1 553.6,250.1 558,247Z"/><path d="M572,206C577,203.2 586.8,205.6 589,208C591.2,210.4 586,214.8 584,219C582,223.2 581.3,229 578,231C574.7,233 568.9,231.5 566,230C563.1,228.5 560.9,227.4 562,223C563.1,218.6 567,208.8 572,206Z"/><path d="M678,157C681.5,155.3 695.8,155.2 698,157C700.2,158.8 692.6,164.1 690,167C687.4,169.9 686,173.2 684,173C682,172.8 680.1,168.9 679,166C677.9,163.1 674.5,158.7 678,157Z"/><path d="M578,323C580.9,319.7 587.2,317.9 592,319C596.8,320.1 600.3,326.4 604,329C607.7,331.6 609.1,330.8 612,333C614.9,335.2 617.8,337 620,341C622.2,345 622.5,350.6 624,355C625.5,359.4 628.7,361.7 628,365C627.3,368.3 623.3,370.4 620,373C616.7,375.6 611.5,376.1 610,379C608.5,381.9 610.5,385.1 612,389C613.5,392.9 626.8,398 618,400C609.2,402 573.2,402.4 564,400C554.8,397.6 566.5,391.9 568,387C569.5,382.1 571.6,377.8 572,373C572.4,368.2 569.3,365.4 570,361C570.7,356.6 574.9,353.4 576,349C577.1,344.6 575.6,341.8 576,337C576.4,332.2 575.1,326.3 578,323Z"/><path d="M612,333C613.8,330.4 624.9,329.2 630,327C635.1,324.8 636.7,320.6 640,321C643.3,321.4 643.6,327.2 648,329C652.4,330.8 661.4,329.2 664,331C666.6,332.8 664.2,336.8 662,339C659.8,341.2 655.3,340.1 652,343C648.7,345.9 643.3,352.1 644,355C644.7,357.9 652.3,358.6 656,359C659.7,359.4 661.4,355.9 664,357C666.6,358.1 670,361.7 670,365C670,368.3 667.3,372.4 664,375C660.7,377.6 656.4,379 652,379C647.6,379 643.3,376.8 640,375C636.7,373.2 634,372.3 634,369C634,365.7 640.4,358.8 640,357C639.6,355.2 634.6,359.4 632,359C629.4,358.6 628.2,358.3 626,355C623.8,351.7 622.6,345 620,341C617.4,337 610.2,335.6 612,333Z"/><path d="M766,330C766.9,329.6 770.3,333 771,335C771.7,337 769.1,338.4 770,341C770.9,343.6 776,345.7 776,349C776,352.3 772.2,355.7 770,359C767.8,362.3 765.5,363.3 764,367C762.5,370.7 763.5,375.3 762,379C760.5,382.7 758.2,383.1 756,387C753.8,390.9 753.3,397.6 750,400C746.7,402.4 740.6,402.8 738,400C735.4,397.2 737.6,390.3 736,385C734.4,379.7 729.7,376.1 729,371C728.3,365.9 730,361 732,357C734,353 736.3,350.5 740,349C743.7,347.5 748,350.1 752,349C756,347.9 759.4,345.2 762,343C764.6,340.8 765.3,339.4 766,337C766.7,334.6 765.1,330.4 766,330Z"/><path d="M512,389C514,387 521,387 523,389C525,391 525,398 523,400C521,402 514,402 512,400C510,398 510,391 512,389Z"/><path d="M960,187C963.7,185 972.5,185 978,185C983.5,185 988.2,184.8 990,187C991.8,189.2 993.9,195.3 988,197C982.1,198.7 963.1,197.8 958,196C952.9,194.2 956.3,189 960,187Z"/><path d="M948,175C949.5,173.2 955.1,170.3 958,171C960.9,171.7 964,176.4 964,179C964,181.6 960.6,184.6 958,185C955.4,185.4 951.8,182.8 950,181C948.2,179.2 946.5,176.8 948,175Z"/><path d="M974,165C974.4,162.1 979.4,161.2 982,163C984.6,164.8 988.4,172.1 988,175C987.6,177.9 982.6,180.8 980,179C977.4,177.2 973.6,167.9 974,165Z"/><path d="M967,227C969.2,224.1 976,223.2 978,225C980,226.8 979.1,233 978,237C976.9,241 974.2,246.3 972,247C969.8,247.7 966.9,244.7 966,241C965.1,237.3 964.8,229.9 967,227Z"/><path d="M868,329C868.7,327.5 873.8,326.3 876,327C878.2,327.7 880.7,331.5 880,333C879.3,334.5 874.2,335.7 872,335C869.8,334.3 867.3,330.5 868,329Z"/><path d="M949,176C950.5,173.8 956.4,171.3 959,172C961.6,172.7 963.4,177.4 963,180C962.6,182.6 959.2,185.3 957,186C954.8,186.7 952.5,185.8 951,184C949.5,182.2 947.5,178.2 949,176Z"/><path d="M973,164C974.8,162.5 980.6,163.8 983,166C985.4,168.2 986.7,173.4 986,176C985.3,178.6 981.4,180.4 979,180C976.6,179.6 974.1,176.9 973,174C971.9,171.1 971.2,165.5 973,164Z"/><path d="M959,192C961.2,190 969.5,186.7 975,186C980.5,185.3 986.8,186.2 989,188C991.2,189.8 991.8,194.3 987,196C982.2,197.7 968.1,197.7 963,197C957.9,196.3 956.8,194 959,192Z"/><path d="M1034,60C1035.5,56.9 1040.2,53.7 1043,53C1045.8,52.3 1048.3,53.6 1049,56C1049.7,58.4 1046.6,62 1047,66C1047.4,70 1051.7,75.4 1051,78C1050.3,80.6 1045.9,81.5 1043,80C1040.1,78.5 1036.7,73.7 1035,70C1033.3,66.3 1032.5,63.1 1034,60Z"/><path d="M966,230C968,227.2 976,225.6 978,228C980,230.4 979,240.2 977,243C975,245.8 969,245.4 967,243C965,240.6 964,232.8 966,230Z"/><path d="M1731,251C1732.8,248.6 1745,241.1 1749,240C1753,238.9 1753,242.2 1753,245C1753,247.8 1751.6,253.5 1749,255C1746.4,256.5 1742.3,253.7 1739,253C1735.7,252.3 1729.2,253.4 1731,251Z"/><path d="M1871,349C1872.8,347.6 1880,347.3 1882,348.6C1884,349.9 1883.8,354.6 1882,356C1880.2,357.4 1874,357.7 1872,356.4C1870,355.1 1869.2,350.4 1871,349Z"/></g>
<g fill="#9fcb98" opacity=".2"><path d="M0,173C2.6,166.6 9.4,176.5 14,178C18.6,179.5 22.8,179 25,181C27.2,183 24.5,186.1 26,189C27.5,191.9 31,193.3 33,197C35,200.7 36.1,206.1 37,209C37.9,211.9 44.8,212.3 38,213C31.2,213.7 7,220.3 0,213C-7,205.7 -2.6,179.4 0,173Z"/><path d="M203,45C205.2,43.4 208.6,41 215,41C221.4,41 233.2,42.4 238,45C242.8,47.6 238.8,51.5 241,55C243.2,58.5 248,60.9 250,64C252,67.1 250.2,69.1 252,72C253.8,74.9 257.4,77.1 260,80C262.6,82.9 263.8,85.4 266,88C268.2,90.6 271.1,91.4 272,94C272.9,96.6 272.1,99.2 271,102C269.9,104.8 268.2,107.2 266,109C263.8,110.8 261.2,111.6 259,112C256.8,112.4 255.5,112.5 254,111C252.5,109.5 252.5,106.4 251,104C249.5,101.6 248,100.6 246,98C244,95.4 241.5,93.3 240,90C238.5,86.7 239.5,83.7 238,80C236.5,76.3 233.8,73.3 232,70C230.2,66.7 229.8,64.2 228,62C226.2,59.8 223.5,57.3 222,58C220.5,58.7 221.8,64.5 220,66C218.2,67.5 214.6,67.5 212,66C209.4,64.5 207.7,60.9 206,58C204.3,55.1 203.6,52.4 203,50C202.4,47.6 200.8,46.6 203,45Z"/></g>
<path d="M0,369C2.4,362.4 6.8,366.2 12,367C17.2,367.8 23.6,369.4 26,373C28.4,376.6 26.4,379.6 24,385C21.6,390.4 18.8,397 14,400C9.2,403 2.8,406.2 0,400C-2.8,393.8 -2.4,375.6 0,369Z" fill="#f2efe9" fill-opacity="0.85"/><path d="M0,277C2,272 7.2,274.4 10,276C12.8,277.6 14.4,280.8 14,285C13.6,289.2 10.8,293.8 8,297C5.2,300.2 1.6,305 0,301C-1.6,297 -2,282 0,277Z" fill="#f2efe9" fill-opacity="0.8"/><path d="M164,369C165.6,366.2 173.6,365 180,365C186.4,365 193.6,366.6 196,369C198.4,371.4 196.8,375 192,377C187.2,379 177.6,380.6 172,379C166.4,377.4 162.4,371.8 164,369Z" fill="#f2efe9" fill-opacity="0.8"/><path d="M86,325C88.4,322.2 96,321.8 100,323C104,324.2 106.4,327.4 106,331C105.6,334.6 101.6,339.8 98,341C94.4,342.2 90.4,340.2 88,337C85.6,333.8 83.6,327.8 86,325Z" fill="#f2efe9" fill-opacity="0.5"/><path d="M22,317C25.2,313.8 32.4,313.8 40,315C47.6,316.2 54.8,318.6 60,323C65.2,327.4 67.6,331.8 66,337C64.4,342.2 58,347.8 52,349C46,350.2 41.6,346.6 36,343C30.4,339.4 26.8,336.2 24,331C21.2,325.8 18.8,320.2 22,317Z" fill="#f2efe9" fill-opacity="0.35"/><path d="M520,14C522.4,11.2 526.8,10.4 530,12C533.2,13.6 536.4,18.4 536,22C535.6,25.6 531.6,29.2 528,30C524.4,30.8 519.6,29.2 518,26C516.4,22.8 517.6,16.8 520,14Z" fill="#f2efe9" fill-opacity="0.7"/><path d="M558,60C560.6,58.4 565.2,59.6 568,62C570.8,64.4 573.2,68.8 572,72C570.8,75.2 565.4,78.4 562,78C558.6,77.6 555.8,73.6 555,70C554.2,66.4 555.4,61.6 558,60Z" fill="#f2efe9" fill-opacity="0.45"/><path d="M418,46C420.4,44 425.2,42.4 428,44C430.8,45.6 433.2,50.8 432,54C430.8,57.2 425.2,60 422,60C418.8,60 416.8,56.8 416,54C415.2,51.2 415.6,48 418,46Z" fill="#f2efe9" fill-opacity="0.7"/>
<defs><pattern id="st" width="4" height="4" patternUnits="userSpaceOnUse" patternTransform="rotate(28)"><rect width="4" height="4" fill="#e0e0e0"/><path d="M0 .5H4M.5 0V4" stroke="#cbcbcb" stroke-width=".5"/></pattern></defs>
<g fill="url(#st)"><path d="M1003,120C1004.3,116.7 1007,114 1011,112C1015,110 1023.7,110.7 1027,108C1030.3,105.3 1028.3,98.3 1031,96C1033.7,93.7 1039,94 1043,94C1047,94 1052.3,93 1055,96C1057.7,99 1057.7,106.7 1059,112C1060.3,117.3 1060.3,123.7 1063,128C1065.7,132.3 1071,136 1075,138C1079,140 1083.7,138.3 1087,140C1090.3,141.7 1094,144.7 1095,148C1096,151.3 1095,155.7 1093,160C1091,164.3 1085.3,169.7 1083,174C1080.7,178.3 1079.7,181.7 1079,186C1078.3,190.3 1077.7,196.3 1079,200C1080.3,203.7 1086.3,204.7 1087,208C1087.7,211.3 1084,216 1083,220C1082,224 1080.3,228.2 1081,232C1081.7,235.8 1104.3,241.2 1087,243C1069.7,244.8 995,244.8 977,243C959,241.2 979.7,235.8 979,232C978.3,228.2 973.3,223.7 973,220C972.7,216.3 974.3,213.3 977,210C979.7,206.7 986.7,203.3 989,200C991.3,196.7 990,194 991,190C992,186 994.7,180.3 995,176C995.3,171.7 992.3,167.3 993,164C993.7,160.7 996,158 999,156C1002,154 1008.7,154.7 1011,152C1013.3,149.3 1014.3,143.3 1013,140C1011.7,136.7 1004.7,135.3 1003,132C1001.3,128.7 1001.7,123.3 1003,120Z"/><path d="M1099,112C1100.7,108 1105.7,103.3 1109,100C1112.3,96.7 1116.7,95.3 1119,92C1121.3,88.7 1120.7,83 1123,80C1125.3,77 1130.3,73.3 1133,74C1135.7,74.7 1137.3,79.7 1139,84C1140.7,88.3 1142,94.7 1143,100C1144,105.3 1146.3,112.3 1145,116C1143.7,119.7 1139.3,120.3 1135,122C1130.7,123.7 1124.3,124.7 1119,126C1113.7,127.3 1106.3,130.3 1103,130C1099.7,129.7 1099.7,127 1099,124C1098.3,121 1097.3,116 1099,112Z"/><path d="M1103,40C1103.3,35.7 1107.3,29.3 1109,30C1110.7,30.7 1112,39.3 1113,44C1114,48.7 1116,56 1115,58C1114,60 1109,59 1107,56C1105,53 1102.7,44.3 1103,40Z"/><path d="M977,207C980,203.8 986.7,202.8 989,200C991.3,197.2 990,194 991,190C992,186 994.7,180.3 995,176C995.3,171.7 992.3,167.2 993,164C993.7,160.8 983.3,158.2 999,157C1014.7,155.8 1071,155.7 1087,157C1103,158.3 1095,161.7 1095,165C1095,168.3 1089.7,173.3 1087,177C1084.3,180.7 1080.3,183.2 1079,187C1077.7,190.8 1077,197.3 1079,200C1081,202.7 1089,201.2 1091,203C1093,204.8 1092.7,208.7 1091,211C1089.3,213.3 1082.7,214.3 1081,217C1079.3,219.7 1079.3,223.7 1081,227C1082.7,230.3 1090,234 1091,237C1092,240 1085,243 1087,245C1089,247 1097,248 1103,249C1109,250 1117.7,249 1123,251C1128.3,253 1135,258.3 1135,261C1135,263.7 1129,266.3 1123,267C1117,267.7 1105.7,265.3 1099,265C1092.3,264.7 1087.7,264.3 1083,265C1078.3,265.7 1073,266.3 1071,269C1069,271.7 1072.7,278 1071,281C1069.3,284 1063,284.3 1061,287C1059,289.7 1058.7,293.3 1059,297C1059.3,300.7 1063.7,306 1063,309C1062.3,312 1058.7,313.7 1055,315C1051.3,316.3 1044.7,317.7 1041,317C1037.3,316.3 1033.7,314.3 1033,311C1032.3,307.7 1037.7,301 1037,297C1036.3,293 1031.3,290.3 1029,287C1026.7,283.7 1024,282 1023,277C1022,272 1025,260.3 1023,257C1021,253.7 1015.3,256 1011,257C1006.7,258 1000,261 997,263C994,265 995.3,268 993,269C990.7,270 985,267 983,269C981,271 982,276.3 981,281C980,285.7 979,293.7 977,297C975,300.3 971,301.3 969,301C967,300.7 965,299 965,295C965,291 968.3,281.3 969,277C969.7,272.7 967,271.3 969,269C971,266.7 979.3,266.7 981,263C982.7,259.3 978.7,251.3 979,247C979.3,242.7 983.3,240.3 983,237C982.7,233.7 979,230 977,227C975,224 971,222.3 971,219C971,215.7 974,210.2 977,207Z"/><path d="M1115,223C1115.7,220.2 1120.7,218.7 1123,219C1125.3,219.3 1128.3,222.3 1129,225C1129.7,227.7 1128.7,233.2 1127,235C1125.3,236.8 1121,238 1119,236C1117,234 1114.3,225.8 1115,223Z"/><path d="M1017,32C1017.7,30.2 1021,27.7 1023,28C1025,28.3 1028.3,32 1029,34C1029.7,36 1028.7,39.2 1027,40C1025.3,40.8 1020.7,40.3 1019,39C1017.3,37.7 1016.3,33.8 1017,32Z"/><path d="M1025,80C1026.8,77.7 1031,77 1033,78C1035,79 1037.3,83.7 1037,86C1036.7,88.3 1033.3,89.7 1031,92C1028.7,94.3 1024.5,100 1023,100C1021.5,100 1021.7,95.3 1022,92C1022.3,88.7 1023.2,82.3 1025,80Z"/><path d="M471,382C472.8,380.2 477.2,378.7 480,379C482.8,379.3 486,381.8 488,384C490,386.2 491.7,389.3 492,392C492.3,394.7 493.7,398.7 490,400C486.3,401.3 473.5,401.7 470,400C466.5,398.3 468.8,393 469,390C469.2,387 469.2,383.8 471,382Z"/><path d="M1787,355C1787.7,352.2 1791,348 1793,345C1795,342 1797,338 1799,337C1801,336 1803.7,337.3 1805,339C1806.3,340.7 1805.3,345.3 1807,347C1808.7,348.7 1813.3,347 1815,349C1816.7,351 1817.7,356.5 1817,359C1816.3,361.5 1814,363.3 1811,364C1808,364.7 1802.7,363.3 1799,363C1795.3,362.7 1791,363.3 1789,362C1787,360.7 1786.3,357.8 1787,355Z"/></g>
<path d="M1061,104C1061.5,101.6 1068.3,101.9 1071,100C1073.7,98.1 1077.3,90.8 1081,90C1084.7,89.2 1096.9,91.6 1099,94C1101.1,96.4 1098.1,104.5 1097,108C1095.9,111.5 1093.1,117.1 1091,120C1088.9,122.9 1083.4,128.9 1081,130C1078.6,131.1 1074.9,129.6 1073,128C1071.1,126.4 1068.6,121.2 1067,118C1065.4,114.8 1060.5,106.4 1061,104Z" fill="#ece9e6" stroke="#e4c9a8" stroke-width=".5"/>
<g fill="#efe1ec"><path d="M1813,316C1810.9,313.5 1813.9,301.7 1815,297C1816.1,292.3 1818.3,286.3 1821,281C1823.7,275.7 1831.8,262.6 1835,257C1838.2,251.4 1842.1,242.5 1845,239C1847.9,235.5 1854.9,229.9 1857,231C1859.1,232.1 1862.3,243.5 1861,247C1859.7,250.5 1849.9,253 1847,257C1844.1,261 1840.9,271.7 1839,277C1837.1,282.3 1834.1,291.8 1833,297C1831.9,302.2 1833.7,313.5 1831,316C1828.3,318.5 1815.1,318.5 1813,316Z"/></g>
<g fill="#dcdcdc"><circle cx="1315" cy="177" r="4"/><circle cx="1338" cy="211" r="4"/><circle cx="1247" cy="234" r="3.6"/><circle cx="1317" cy="263" r="2.8"/><circle cx="1268" cy="281" r="2.8"/><circle cx="1295" cy="319" r="3.6"/><circle cx="1353" cy="352" r="4.4"/><circle cx="1435" cy="347" r="8"/><circle cx="1221" cy="331" r="2.4"/><circle cx="1159" cy="277" r="2.8"/><circle cx="1281" cy="377" r="3.2"/><circle cx="1323" cy="393" r="4"/><circle cx="1181" cy="122" r="3.2"/><circle cx="1257" cy="117" r="2.8"/><circle cx="1282" cy="85" r="3.6"/><circle cx="1335" cy="106" r="2.8"/><circle cx="1237" cy="84" r="2"/><circle cx="1765" cy="39" r="3.6"/><circle cx="1796" cy="75" r="3.6"/><circle cx="1835" cy="53" r="2"/><circle cx="1852" cy="110" r="2.8"/><circle cx="1485" cy="122" r="2.8"/><circle cx="1533" cy="147" r="2.8"/><circle cx="1633" cy="123" r="2"/><circle cx="1859" cy="26" r="2"/><circle cx="1679" cy="79" r="1.6"/><circle cx="1457" cy="57" r="2"/><circle cx="1563" cy="199" r="1.6"/><circle cx="1549" cy="194" r="1.6"/><circle cx="1539" cy="385" r="4.4"/><circle cx="1588" cy="366" r="2.8"/><circle cx="1617" cy="287" r="1.6"/><circle cx="1717" cy="344" r="1.2"/><circle cx="1563" cy="199" r="1.6"/><circle cx="780" cy="265" r="4.4"/><circle cx="576" cy="45" r="2"/><circle cx="596" cy="32" r="1.6"/><circle cx="153" cy="61" r="2.8"/><circle cx="148" cy="113" r="2"/><circle cx="213" cy="92" r="2"/></g>
<path d="M250.5,114.8C253.3,114.6 255.6,114.8 258,116C260.4,117.2 261.4,118.8 262.4,121C263.4,123.2 262.1,125 263,127.2C263.9,129.4 265,131.1 266.8,132.2C268.6,133.3 270.4,131.6 271.8,132.9C273.2,134.2 272.9,136.1 273.6,138.5C274.3,140.9 274.4,142.5 275.5,144.8C276.6,147.1 277.9,147.7 279.2,149.8C280.5,151.9 280,153.7 281.8,155.4C283.6,157.1 285.5,157.3 288,158.5C290.5,159.7 292,160.3 294.2,161.6C296.4,162.9 296.7,162.7 299.2,164.8C301.7,166.9 304,169 306.8,172.2C309.6,175.4 311.3,177.7 313,181C314.7,184.3 314.5,185.5 315.5,188.5C316.5,191.5 317,193.5 318,196C319,198.5 318.3,199.8 320.5,201C322.7,202.2 325.7,201.4 329.2,202.2C332.7,203 335,203.3 338,204.8C341,206.3 341.7,208.1 344.2,209.8C346.7,211.5 347.7,211.8 350.5,213.5C353.3,215.2 355.3,216.5 358,218.5C360.7,220.5 362.6,221 364.2,223.5C365.8,226 366.1,228 366.1,231C366.1,234 364.3,235.7 364.2,238.5C364.1,241.3 364.5,242.3 365.5,244.8C366.5,247.3 367.5,248.8 369.2,251C370.9,253.2 373.9,255.6 374.2,256C374.5,256.4 370.2,252.6 370.5,253C370.8,253.4 373.8,255.8 375.5,258C377.2,260.2 378.2,261.7 379.2,264.2C380.2,266.7 380.7,267.7 380.5,270.5C380.3,273.3 379,275 378,278C377,281 376,282.5 375.5,285.5C375,288.5 374.8,290 375.5,293C376.2,296 378.2,297.7 379.2,300.5C380.2,303.3 379.7,305.1 380.5,306.8C381.3,308.5 381.5,309.7 383,309.2C384.5,308.7 386.2,306.4 388,304.2C389.8,302 390.6,300.7 391.8,298C393,295.3 392.5,293.3 394.2,290.5C395.9,287.7 398,285.9 400.5,284.2C403,282.5 404.1,282.3 406.8,281.8C409.5,281.3 411.7,281.3 414.2,281.8C416.7,282.3 417.7,282.7 419.2,284.2C420.7,285.7 421,286.9 421.8,289.2C422.6,291.5 422.6,292.5 423,295.5C423.4,298.5 423.6,300.7 423.6,304.2C423.6,307.7 422.9,309.5 423,313C423.1,316.5 423,318.8 424.2,321.8C425.4,324.8 427.2,325.3 429.2,328C431.2,330.7 432.4,332.7 434.2,335.5C436,338.3 436.5,339.3 438,341.8C439.5,344.3 440.3,345.5 441.8,348C443.3,350.5 443.8,351.7 445.5,354.2C447.2,356.7 448.5,358.2 450.5,360.5C452.5,362.8 453.5,363.5 455.5,365.5C457.5,367.5 458.5,368.2 460.5,370.5C462.5,372.8 463.8,374.3 465.5,376.8C467.2,379.3 468.7,380.5 469.2,383C469.7,385.5 468.7,386.7 468,389.2C467.3,391.7 466.5,393.3 465.5,395.5C464.5,397.7 499.7,399.1 463,400C426.3,400.9 318.2,401.2 281.8,400C245.4,398.8 281.6,396.6 281.1,394.2C280.6,391.8 280.8,390 279.2,388C277.6,386 274.5,386.2 273,384.2C271.5,382.2 272,380.5 271.8,378C271.6,375.5 271.1,373.8 271.8,371.8C272.5,369.8 273.3,369.8 275.5,368C277.7,366.2 282.3,365.2 283,363C283.7,360.8 280.2,359.3 279.2,356.8C278.2,354.3 278.7,353.3 278,350.5C277.3,347.7 276.5,346 275.5,343C274.5,340 274,338.5 273,335.5C272,332.5 271.7,331.3 270.5,328C269.3,324.7 268.3,322.4 266.8,319.2C265.3,316 264.8,314.5 263,311.8C261.2,309.1 260,308 258,305.5C256,303 254.5,301.9 253,299.2C251.5,296.5 250.7,294.8 250.5,291.8C250.3,288.8 252.1,287.2 251.8,284.2C251.5,281.2 250.7,279.5 249.2,276.8C247.7,274.1 245.7,273 244.2,270.5C242.7,268 243,266.7 241.8,264.2C240.6,261.7 239.8,260.5 238,258C236.2,255.5 235,253.8 233,251.8C231,249.8 228,247.9 228,248C228,248.1 233.2,252.6 233,252.2C232.8,251.8 229,248.5 226.8,246C224.6,243.5 224.1,242.6 221.8,239.8C219.5,237 217.8,235.2 215.5,232.2C213.2,229.2 212.5,227.8 210.5,224.8C208.5,221.8 207.2,220.2 205.5,217.2C203.8,214.2 203.3,213 201.8,209.8C200.3,206.6 199.5,204.5 198,201C196.5,197.5 196,196 194.2,192.2C192.4,188.4 191.4,185.9 189.2,182.2C187,178.5 185.2,176.7 183,173.5C180.8,170.3 179.9,168.7 178,166C176.1,163.3 174.7,162 173.6,159.8C172.5,157.6 172.3,156.6 172.4,154.8C172.5,153 173.1,152.4 174.2,151C175.3,149.6 176.2,148.4 178,147.9C179.8,147.4 181.4,148.1 183,148.5C184.6,148.9 185.6,150.8 186.1,149.8C186.6,148.8 186.1,145.8 185.5,143.5C184.9,141.2 183.6,140.8 183,138.5C182.4,136.2 181.8,134.1 182.4,132.2C183,130.3 184.5,129.3 186.1,129.1C187.7,128.9 189.2,129.5 190.5,131C191.8,132.5 191.8,136.1 192.4,136.6C193,137.1 193,134.7 193.6,133.5C194.2,132.3 194.1,131 195.5,130.4C196.9,129.8 198.5,130.4 200.5,130.4C202.5,130.4 203.5,130.2 205.5,130.4C207.5,130.6 208,130.9 210.5,131.6C213,132.3 215,133 218,134.1C221,135.2 223,136.8 225.5,137.2C228,137.6 228.5,137.5 230.5,136C232.5,134.5 233.8,132.6 235.5,129.8C237.2,127 237.5,124.7 239.2,122.2C240.9,119.7 241.9,118.7 244.2,117.2C246.5,115.7 247.7,115 250.5,114.8Z" fill="#aad3df"/>
<g fill="#aad3df"><path d="M3,221C4,221.2 5.8,222.6 8,225C10.2,227.4 11.6,230.2 14,233C16.4,235.8 19,236.8 20,239C21,241.2 20.2,243.6 19,244C17.8,244.4 16.2,243.6 14,241C11.8,238.4 10.2,234.4 8,231C5.8,227.6 4,226 3,224C2,222 2,220.8 3,221Z"/><path d="M879,181C880,180.6 882.6,184.2 886,186C889.4,187.8 893.6,188.2 896,190C898.4,191.8 898.8,193 898,195C897.2,197 894.4,199.8 892,200C889.6,200.2 888.2,198.4 886,196C883.8,193.6 882.4,191 881,188C879.6,185 878,181.4 879,181Z"/><path d="M1883,352C1883.2,350.4 1884.4,349.8 1886,349.4C1887.6,349 1889.5,349.1 1891,350C1892.5,350.9 1893.6,352.4 1893.4,354C1893.2,355.6 1891.7,357.3 1890,358C1888.3,358.7 1886.4,358.8 1885,357.6C1883.6,356.4 1882.8,353.6 1883,352Z"/><path d="M560,169C561.6,167.6 568.2,166.6 570,167C571.8,167.4 570.6,169.6 569,171C567.4,172.4 563.8,174.4 562,174C560.2,173.6 558.4,170.4 560,169Z"/><path d="M731,394C731.8,392.6 734,391.8 735,393C736,394.2 736.8,398.6 736,400C735.2,401.4 732,401.2 731,400C730,398.8 730.2,395.4 731,394Z"/></g>
<g fill="#bddab1"><path d="M201.8,178.5C203.7,177.5 206.2,176.1 209.2,176C212.2,175.9 214.5,177.8 216.8,177.9C219.1,178 219.9,175.7 220.5,176.6C221.1,177.5 220.4,179.8 219.9,182.2C219.4,184.6 217.4,187.1 218,188.5C218.6,189.9 221.5,187.6 223,189.1C224.5,190.6 225,192.9 225.5,196C226,199.1 225.8,201.8 225.5,204.8C225.2,207.8 225.2,210.3 224.2,211C223.2,211.7 222,210.3 220.5,208.5C219,206.7 218.3,203.7 216.8,202.2C215.3,200.7 214.5,202.2 213,201C211.5,199.8 211,198 209.2,196C207.4,194 205.9,193 204.2,191C202.5,189 201.4,188 200.5,186C199.6,184 199.6,182.5 199.9,181C200.2,179.5 199.9,179.5 201.8,178.5Z"/><path d="M242,248C243.7,246.2 247,246.6 250,247C253,247.4 255.8,248.2 257,250C258.2,251.8 257.2,254.2 256,256C254.8,257.8 252.2,257.4 251,259C249.8,260.6 251.6,263 250,264C248.4,265 244.7,265.6 243,264C241.3,262.4 241.8,259.2 241.6,256C241.4,252.8 240.3,249.8 242,248Z"/><path d="M262,248C263.3,246.4 266.8,246.2 269,247C271.2,247.8 272.2,249.4 273,252C273.8,254.6 273.8,257.4 273,260C272.2,262.6 270.6,264.8 269,265C267.4,265.2 266.3,263 265,261C263.7,259 263,257.6 262.4,255C261.8,252.4 260.7,249.6 262,248Z"/><path d="M269,242C269.4,240.8 272.2,240.4 274,241C275.8,241.6 277.4,243.2 278,245C278.6,246.8 278.2,249.6 277,250C275.8,250.4 273.6,248.6 272,247C270.4,245.4 268.6,243.2 269,242Z"/></g>
<g fill="#f2efe9"><path d="M399.2,316.1C399.4,314.8 400.2,314.4 401.1,315.5C402,316.6 403,319.3 403.6,321.8C404.2,324.3 404.4,326.9 404.2,328C404,329.1 403.3,328.6 402.4,327.4C401.5,326.2 400.5,324.1 399.9,321.8C399.3,319.5 399,317.4 399.2,316.1Z"/><path d="M349.9,286.8C350.5,285.8 351.8,286.4 352.4,287.4C353,288.4 353.6,290.8 353,291.8C352.4,292.8 350.1,293.4 349.5,292.4C348.9,291.4 349.3,287.8 349.9,286.8Z"/><path d="M414.2,301.8C415.1,299 417.6,298.2 418.6,299.2C419.6,300.2 419.4,303.5 419.2,306.8C419,310.1 418.1,312.8 417.4,315.5C416.7,318.2 416.1,321 415.5,320.5C414.9,320 414.5,316.7 414.2,313C413.9,309.3 413.3,304.6 414.2,301.8Z"/></g>
<path d="M1896,231.8h6.4M1899.4,236h5.2M1894,240.2h4.4M1890.2,243.8h6.8M1883.4,248.6h5.2M1892.8,248.6h4.6M1872.8,252.8h6M1885.2,253.2h7.2M1897.4,253h5.4M1866.8,257.2h5.8M1878.6,256.2h4.6M1889.4,256.6h6.6M1861.8,260.8h6.4M1872.2,260.8h5.8M1882.4,260.4h6.2M1894,260.6h4.4M1852.6,265.2h7M1863.8,265.2h4.8M1873.8,265h6M1886.6,265.8h4.8M1896.6,265.4h7M1856.6,268.8h4.8M1865.8,269h4.8M1876.6,268.8h5M1887,269.6h7M1848.8,273.8h6.2M1860,274h4.8M1871.4,273.8h6M1883.4,274h6.4M1842.2,277.8h5.6M1853,277.2h5.6M1864,277.8h6.4M1874.4,277.2h5M1884,277.4h5.8M1842.8,281.4h6M1853.8,281.4h6.2M1864.2,281.6h7M1877,281.6h5.6M1838,285.6h4.6M1849.2,286.2h5.8M1860.4,286h5.8M1870.4,285.6h4.8M1881.4,286.6h5.4M1838.4,290.2h6M1848.8,290.6h6.6M1862.2,291h4.4M1872.2,290.8h5.2M1844.4,294.8h5M1855,294.8h6.8M1866.8,294.2h6.4M1837.2,298.8h7M1850.4,298.4h6.8M1861.8,298.8h6M1872.8,298.2h6.6M1840.4,303.4h6.8M1852.2,302.4h5.4M1862.2,302.6h4.6M1844.8,307h6.4M1857.6,306.6h6.4M1838,311h7.2M1850.4,311.8h6.8M1862.2,312h4.6M1837,315.6h6.2M1849.6,315.2h6.4M1842.6,320.4h4.4M1853.2,319.2h6.4M1846.4,323.8h5M183,123.5h6.9M177.4,127.5h4.8M189.2,127.5h6.9M199.2,130.4h6.2M176.8,134.5h5.2M189.9,131.6h2.2M273,141.4h6.5M277.4,144.5h6.5M279.2,149.4h6.5M281.1,154.4h3.8M288.6,154.4h6M289.9,160.6h2.8M274.2,134.5h3.1M312.4,185.2h3.5M316.1,193.5h2.8M197.4,194.5h3.5M376.1,283.4h3.5M375.5,290.5h2.5M419.2,302.6h3.8M412.4,304.5h2.8M418,307.6h2.8M414.2,311.4h2.5M415.5,316.4h3.1M423.6,320.1h2.8M425.5,327h3.8M440.5,327h3.1M439.9,334.2h5M432.4,337.4h3.8M448,338.2h5M443,352.4h2.5M444.2,359h3.8M449.9,359h2.5M452.4,364.2h3.8M460.5,377.4h2.5" stroke="#3d9cf0" stroke-width=".8" fill="none"/>
<g fill="none" stroke="#7dbb7a" stroke-opacity=".32" stroke-width="3.4" stroke-linejoin="round"><path d="M0,100C2.4,99 6.8,96.4 12,95C17.2,93.6 18.4,92.8 26,93C33.6,93.2 42,95 50,96C58,97 60.4,97.4 66,98C71.6,98.6 73.2,97.8 78,99C82.8,100.2 84.8,101.4 90,104C95.2,106.6 98.8,108.8 104,112C109.2,115.2 111.2,118.8 116,120C120.8,121.2 124,118.4 128,118C132,117.6 132.8,116.4 136,118C139.2,119.6 142.8,123.2 144,126C145.2,128.8 140.8,130 142,132C143.2,134 146.8,133.2 150,136C153.2,138.8 155.6,142.8 158,146C160.4,149.2 160,151.2 162,152C164,152.8 166,152.4 168,150C170,147.6 170.8,144.4 172,140C173.2,135.6 174,131.6 174,128C174,124.4 171.6,124.4 172,122C172.4,119.6 172.8,117.6 176,116C179.2,114.4 184,112.8 188,114C192,115.2 192.8,119.6 196,122C199.2,124.4 200.8,124.4 204,126C207.2,127.6 207.6,128 212,130C216.4,132 222,135.6 226,136C230,136.4 229.6,134.4 232,132C234.4,129.6 235.6,127.2 238,124C240.4,120.8 241.2,118 244,116C246.8,114 250.4,114.4 252,114"/><path d="M162,152C163.6,153.2 166.4,153.6 170,158C173.6,162.4 176,167.2 180,174C184,180.8 186,185.2 190,192C194,198.8 196,202 200,208C204,214 206,216 210,222C214,228 218,234.8 220,238"/><path d="M216,233C214.4,234.6 210.6,237.8 208,241C205.4,244.2 203.8,245 203,249C202.2,253 202.2,256.2 204,261C205.8,265.8 209.2,268.2 212,273C214.8,277.8 215.6,280.2 218,285C220.4,289.8 222.4,292.6 224,297C225.6,301.4 223.6,303.8 226,307C228.4,310.2 232,311 236,313C240,315 243.2,314.2 246,317C248.8,319.8 251.2,324.2 250,327C248.8,329.8 244,330.6 240,331C236,331.4 234,330.6 230,329C226,327.4 222.8,322.2 220,323C217.2,323.8 216,329 216,333C216,337 220,338.6 220,343C220,347.4 216,350.6 216,355C216,359.4 219.2,363 220,365"/><path d="M246,317C245.8,315 244.2,310.2 245,307C245.8,303.8 247.8,301 250,301C252.2,301 254,303.8 256,307C258,310.2 257.6,313.4 260,317C262.4,320.6 266.4,323.4 268,325"/><path d="M1331,0C1333.4,1.2 1338.2,2.8 1343,6C1347.8,9.2 1349.8,13.4 1355,16C1360.2,18.6 1363.4,17.8 1369,19C1374.6,20.2 1382.6,19.8 1383,22C1383.4,24.2 1376,26.8 1371,30C1366,33.2 1360.4,34.4 1358,38C1355.6,41.6 1360,44 1359,48C1358,52 1355,52.4 1353,58C1351,63.6 1350.6,68.8 1349,76C1347.4,83.2 1346.2,86.8 1345,94C1343.8,101.2 1343,104.8 1343,112C1343,119.2 1345,122.8 1345,130C1345,137.2 1343.4,142.4 1343,148C1342.6,153.6 1341,153.6 1343,158C1345,162.4 1348.2,165.6 1353,170C1357.8,174.4 1361,176 1367,180C1373,184 1376.6,186 1383,190C1389.4,194 1392.6,196.4 1399,200C1405.4,203.6 1408.6,204.8 1415,208C1421.4,211.2 1424.6,213.6 1431,216C1437.4,218.4 1442.2,218.4 1447,220C1451.8,221.6 1453.4,223.2 1455,224"/><path d="M1455,4L1441,0"/><path d="M1427,0C1424.2,1.8 1413.8,6.2 1413,9C1412.2,11.8 1419.8,11.4 1423,14C1426.2,16.6 1425.4,19.2 1429,22C1432.6,24.8 1435.8,26 1441,28C1446.2,30 1452.2,31.2 1455,32"/><path d="M1403,40C1407,42.4 1415.8,46.8 1423,52C1430.2,57.2 1432.6,60 1439,66C1445.4,72 1451.8,78.8 1455,82"/><path d="M1455,82C1456.6,82.8 1460,84.4 1463,86C1466,87.6 1467.2,86.4 1470,90C1472.8,93.6 1474,98.8 1477,104C1480,109.2 1482.8,112.4 1485,116C1487.2,119.6 1487.6,119.2 1488,122C1488.4,124.8 1488.8,126.4 1487,130C1485.2,133.6 1481.2,136.4 1479,140C1476.8,143.6 1475.6,144.8 1476,148C1476.4,151.2 1478,153.6 1481,156C1484,158.4 1486.6,159.2 1491,160C1495.4,160.8 1497.4,161.2 1503,160C1508.6,158.8 1513.4,156.2 1519,154C1524.6,151.8 1527,147 1531,149C1535,151 1535.6,157.8 1539,164C1542.4,170.2 1546,174 1548,180C1550,186 1548,188.8 1549,194C1550,199.2 1552.6,201.2 1553,206C1553.4,210.8 1552.8,213.6 1551,218C1549.2,222.4 1544,224 1544,228C1544,232 1550,235 1551,238C1552,241 1549.4,242 1549,243"/><path d="M1549,243C1546.2,243.6 1541.8,245.8 1535,246C1528.2,246.2 1523,244.6 1515,244C1507,243.4 1503,244.8 1495,243C1487,241.2 1481.8,238.2 1475,235C1468.2,231.8 1465,229 1461,227C1457,225 1456.2,225.4 1455,225"/><path d="M1343,157C1345,159.4 1348.2,163.8 1353,169C1357.8,174.2 1361,178.2 1367,183C1373,187.8 1376.6,189.2 1383,193C1389.4,196.8 1392.6,198.8 1399,202C1405.4,205.2 1408.6,206.2 1415,209C1421.4,211.8 1424.6,213.6 1431,216C1437.4,218.4 1442.2,219.4 1447,221C1451.8,222.6 1453.4,223.4 1455,224"/><path d="M263,127.2C263.8,128.1 264.8,130.5 266.8,131.6C268.8,132.7 269.8,130.5 273,132.9C276.2,135.3 278.5,138.9 283,143.5C287.5,148.1 292,152 295.5,156C299,160 298,160.5 300.5,163.5C303,166.5 305.1,167.5 308,171C310.9,174.5 312.7,176.5 314.9,181C317.1,185.5 317.7,189.9 319.2,193.5C320.7,197.1 320.1,197.7 322.4,199.1C324.7,200.5 327.1,199.6 330.5,200.4C333.9,201.2 336.2,201.3 339.2,202.9C342.2,204.5 343,206.6 345.5,208.5C348,210.4 349.1,210.5 351.8,212.2C354.5,213.9 356.3,215.1 359.2,217.2C362.1,219.3 364.3,220.1 366.1,222.9C367.9,225.7 368,227.9 368,231C368,234.1 366.2,235.7 366.1,238.5C366,241.3 366.4,242.3 367.4,244.8C368.4,247.3 369.5,248.8 371.1,251C372.7,253.2 374.6,255 375.5,256"/><path d="M365.5,248C366.8,248.8 369.5,250.3 371.8,251.8C374.1,253.3 374.6,255.5 376.8,255.5C379,255.5 380,252.8 383,251.8C386,250.8 389.6,249.5 391.8,250.5C394,251.5 392,254.8 394.2,256.8C396.4,258.8 402.7,258.5 403,260.5C403.3,262.5 398.5,264.3 395.5,266.8C392.5,269.3 390.7,271.3 388,273C385.3,274.7 383.6,274 381.8,275.5C380,277 379.7,279.5 379.2,280.5"/><path d="M380.5,308C381.1,308.6 381.9,311.6 383.6,311.1C385.3,310.6 387.3,308.1 389.2,305.5C391.1,302.9 391.7,301 393,298C394.3,295 393.9,293.4 395.5,290.5C397.1,287.6 398.7,285.6 401.1,283.6C403.5,281.6 404.6,281.2 407.4,280.5C410.2,279.8 412.3,279.6 414.9,280.2C417.5,280.8 418.8,281.8 420.5,283.6C422.2,285.4 422.7,286.3 423.6,289.2C424.5,292.1 424.5,293.2 424.9,298C425.3,302.8 425.1,308.2 425.5,313C425.9,317.8 425.5,318.8 426.8,321.8C428.1,324.8 429.8,325.3 431.8,328C433.8,330.7 434.3,337.3 436.8,335.5C439.3,333.7 442.5,319.7 444.2,319.2C445.9,318.7 445.5,328.2 445.5,333C445.5,337.8 443.5,339.2 444.2,343C444.9,346.8 446.9,350 449.2,351.8C451.5,353.6 454,350.1 455.5,351.8C457,353.5 455.3,357.3 456.8,360.5C458.3,363.7 460.8,365 463,368C465.2,371 466.2,372.5 468,375.5C469.8,378.5 471,381.5 471.8,383"/></g>
<g fill="none" stroke="#6aaa6a" stroke-opacity=".4" stroke-width="1" stroke-linejoin="round"><path d="M0,100C2.4,99 6.8,96.4 12,95C17.2,93.6 18.4,92.8 26,93C33.6,93.2 42,95 50,96C58,97 60.4,97.4 66,98C71.6,98.6 73.2,97.8 78,99C82.8,100.2 84.8,101.4 90,104C95.2,106.6 98.8,108.8 104,112C109.2,115.2 111.2,118.8 116,120C120.8,121.2 124,118.4 128,118C132,117.6 132.8,116.4 136,118C139.2,119.6 142.8,123.2 144,126C145.2,128.8 140.8,130 142,132C143.2,134 146.8,133.2 150,136C153.2,138.8 155.6,142.8 158,146C160.4,149.2 160,151.2 162,152C164,152.8 166,152.4 168,150C170,147.6 170.8,144.4 172,140C173.2,135.6 174,131.6 174,128C174,124.4 171.6,124.4 172,122C172.4,119.6 172.8,117.6 176,116C179.2,114.4 184,112.8 188,114C192,115.2 192.8,119.6 196,122C199.2,124.4 200.8,124.4 204,126C207.2,127.6 207.6,128 212,130C216.4,132 222,135.6 226,136C230,136.4 229.6,134.4 232,132C234.4,129.6 235.6,127.2 238,124C240.4,120.8 241.2,118 244,116C246.8,114 250.4,114.4 252,114"/><path d="M162,152C163.6,153.2 166.4,153.6 170,158C173.6,162.4 176,167.2 180,174C184,180.8 186,185.2 190,192C194,198.8 196,202 200,208C204,214 206,216 210,222C214,228 218,234.8 220,238"/><path d="M216,233C214.4,234.6 210.6,237.8 208,241C205.4,244.2 203.8,245 203,249C202.2,253 202.2,256.2 204,261C205.8,265.8 209.2,268.2 212,273C214.8,277.8 215.6,280.2 218,285C220.4,289.8 222.4,292.6 224,297C225.6,301.4 223.6,303.8 226,307C228.4,310.2 232,311 236,313C240,315 243.2,314.2 246,317C248.8,319.8 251.2,324.2 250,327C248.8,329.8 244,330.6 240,331C236,331.4 234,330.6 230,329C226,327.4 222.8,322.2 220,323C217.2,323.8 216,329 216,333C216,337 220,338.6 220,343C220,347.4 216,350.6 216,355C216,359.4 219.2,363 220,365"/><path d="M246,317C245.8,315 244.2,310.2 245,307C245.8,303.8 247.8,301 250,301C252.2,301 254,303.8 256,307C258,310.2 257.6,313.4 260,317C262.4,320.6 266.4,323.4 268,325"/><path d="M1331,0C1333.4,1.2 1338.2,2.8 1343,6C1347.8,9.2 1349.8,13.4 1355,16C1360.2,18.6 1363.4,17.8 1369,19C1374.6,20.2 1382.6,19.8 1383,22C1383.4,24.2 1376,26.8 1371,30C1366,33.2 1360.4,34.4 1358,38C1355.6,41.6 1360,44 1359,48C1358,52 1355,52.4 1353,58C1351,63.6 1350.6,68.8 1349,76C1347.4,83.2 1346.2,86.8 1345,94C1343.8,101.2 1343,104.8 1343,112C1343,119.2 1345,122.8 1345,130C1345,137.2 1343.4,142.4 1343,148C1342.6,153.6 1341,153.6 1343,158C1345,162.4 1348.2,165.6 1353,170C1357.8,174.4 1361,176 1367,180C1373,184 1376.6,186 1383,190C1389.4,194 1392.6,196.4 1399,200C1405.4,203.6 1408.6,204.8 1415,208C1421.4,211.2 1424.6,213.6 1431,216C1437.4,218.4 1442.2,218.4 1447,220C1451.8,221.6 1453.4,223.2 1455,224"/><path d="M1455,4L1441,0"/><path d="M1427,0C1424.2,1.8 1413.8,6.2 1413,9C1412.2,11.8 1419.8,11.4 1423,14C1426.2,16.6 1425.4,19.2 1429,22C1432.6,24.8 1435.8,26 1441,28C1446.2,30 1452.2,31.2 1455,32"/><path d="M1403,40C1407,42.4 1415.8,46.8 1423,52C1430.2,57.2 1432.6,60 1439,66C1445.4,72 1451.8,78.8 1455,82"/><path d="M1455,82C1456.6,82.8 1460,84.4 1463,86C1466,87.6 1467.2,86.4 1470,90C1472.8,93.6 1474,98.8 1477,104C1480,109.2 1482.8,112.4 1485,116C1487.2,119.6 1487.6,119.2 1488,122C1488.4,124.8 1488.8,126.4 1487,130C1485.2,133.6 1481.2,136.4 1479,140C1476.8,143.6 1475.6,144.8 1476,148C1476.4,151.2 1478,153.6 1481,156C1484,158.4 1486.6,159.2 1491,160C1495.4,160.8 1497.4,161.2 1503,160C1508.6,158.8 1513.4,156.2 1519,154C1524.6,151.8 1527,147 1531,149C1535,151 1535.6,157.8 1539,164C1542.4,170.2 1546,174 1548,180C1550,186 1548,188.8 1549,194C1550,199.2 1552.6,201.2 1553,206C1553.4,210.8 1552.8,213.6 1551,218C1549.2,222.4 1544,224 1544,228C1544,232 1550,235 1551,238C1552,241 1549.4,242 1549,243"/><path d="M1549,243C1546.2,243.6 1541.8,245.8 1535,246C1528.2,246.2 1523,244.6 1515,244C1507,243.4 1503,244.8 1495,243C1487,241.2 1481.8,238.2 1475,235C1468.2,231.8 1465,229 1461,227C1457,225 1456.2,225.4 1455,225"/><path d="M1343,157C1345,159.4 1348.2,163.8 1353,169C1357.8,174.2 1361,178.2 1367,183C1373,187.8 1376.6,189.2 1383,193C1389.4,196.8 1392.6,198.8 1399,202C1405.4,205.2 1408.6,206.2 1415,209C1421.4,211.8 1424.6,213.6 1431,216C1437.4,218.4 1442.2,219.4 1447,221C1451.8,222.6 1453.4,223.4 1455,224"/><path d="M263,127.2C263.8,128.1 264.8,130.5 266.8,131.6C268.8,132.7 269.8,130.5 273,132.9C276.2,135.3 278.5,138.9 283,143.5C287.5,148.1 292,152 295.5,156C299,160 298,160.5 300.5,163.5C303,166.5 305.1,167.5 308,171C310.9,174.5 312.7,176.5 314.9,181C317.1,185.5 317.7,189.9 319.2,193.5C320.7,197.1 320.1,197.7 322.4,199.1C324.7,200.5 327.1,199.6 330.5,200.4C333.9,201.2 336.2,201.3 339.2,202.9C342.2,204.5 343,206.6 345.5,208.5C348,210.4 349.1,210.5 351.8,212.2C354.5,213.9 356.3,215.1 359.2,217.2C362.1,219.3 364.3,220.1 366.1,222.9C367.9,225.7 368,227.9 368,231C368,234.1 366.2,235.7 366.1,238.5C366,241.3 366.4,242.3 367.4,244.8C368.4,247.3 369.5,248.8 371.1,251C372.7,253.2 374.6,255 375.5,256"/><path d="M365.5,248C366.8,248.8 369.5,250.3 371.8,251.8C374.1,253.3 374.6,255.5 376.8,255.5C379,255.5 380,252.8 383,251.8C386,250.8 389.6,249.5 391.8,250.5C394,251.5 392,254.8 394.2,256.8C396.4,258.8 402.7,258.5 403,260.5C403.3,262.5 398.5,264.3 395.5,266.8C392.5,269.3 390.7,271.3 388,273C385.3,274.7 383.6,274 381.8,275.5C380,277 379.7,279.5 379.2,280.5"/><path d="M380.5,308C381.1,308.6 381.9,311.6 383.6,311.1C385.3,310.6 387.3,308.1 389.2,305.5C391.1,302.9 391.7,301 393,298C394.3,295 393.9,293.4 395.5,290.5C397.1,287.6 398.7,285.6 401.1,283.6C403.5,281.6 404.6,281.2 407.4,280.5C410.2,279.8 412.3,279.6 414.9,280.2C417.5,280.8 418.8,281.8 420.5,283.6C422.2,285.4 422.7,286.3 423.6,289.2C424.5,292.1 424.5,293.2 424.9,298C425.3,302.8 425.1,308.2 425.5,313C425.9,317.8 425.5,318.8 426.8,321.8C428.1,324.8 429.8,325.3 431.8,328C433.8,330.7 434.3,337.3 436.8,335.5C439.3,333.7 442.5,319.7 444.2,319.2C445.9,318.7 445.5,328.2 445.5,333C445.5,337.8 443.5,339.2 444.2,343C444.9,346.8 446.9,350 449.2,351.8C451.5,353.6 454,350.1 455.5,351.8C457,353.5 455.3,357.3 456.8,360.5C458.3,363.7 460.8,365 463,368C465.2,371 466.2,372.5 468,375.5C469.8,378.5 471,381.5 471.8,383"/></g>
<g fill="none" stroke="#b6b6b6" stroke-width=".65" stroke-linejoin="round"><path d="M76,4C80.7,4.9 85.7,6.1 96,8C106.3,9.9 109.7,9.2 120,12C130.3,14.8 130.7,18.4 140,20C149.3,21.6 150.7,18.5 160,19C169.3,19.5 175.3,21.3 180,22"/><path d="M128,31C131.7,32.4 136.5,34.2 144,37C151.5,39.8 157.7,39 160,43C162.3,47 154.9,46.3 154,54C153.1,61.7 154.1,66.7 156,76C157.9,85.3 160.1,83.7 162,94C163.9,104.3 162.6,108.3 164,120C165.4,131.7 166.1,134.7 168,144C169.9,153.3 168.3,151.6 172,160C175.7,168.4 177.9,169.7 184,180C190.1,190.3 191.5,194.7 198,204C204.5,213.3 208.7,216.3 212,220"/><path d="M160,43C164.7,40 170.7,34.9 180,30C189.3,25.1 190.7,22.9 200,22C209.3,21.1 213,26.5 220,26C227,25.5 227.7,21.4 230,20"/><path d="M162,44C165.3,49.1 172.3,55.3 176,66C179.7,76.7 179.9,81.1 178,90C176.1,98.9 175,98.6 168,104C161,109.4 152.7,110.9 148,113"/><path d="M184,76C187.7,79.3 191.6,84.9 200,90C208.4,95.1 210.7,95.2 220,98C229.3,100.8 233,99.4 240,102C247,104.6 247.7,107.4 250,109"/><path d="M230,20C234.7,19.5 240.7,19.9 250,18C259.3,16.1 261.1,15.3 270,12C278.9,8.7 283.3,6.8 288,4C292.7,1.2 289.5,0.9 290,0"/><path d="M250,27C257,25.4 269.7,20.2 280,20C290.3,19.8 290.7,24.6 294,26"/><path d="M319,125C323.9,124.8 330.4,121.4 340,124C349.6,126.6 350.7,132.3 360,136C369.3,139.7 371.6,137.2 380,140C388.4,142.8 387.6,141.5 396,148C404.4,154.5 405.7,160.5 416,168C426.3,175.5 430.7,175.8 440,180C449.3,184.2 449,186 456,186C463,186 462.1,182.3 470,180C477.9,177.7 480.2,175.5 490,176C499.8,176.5 506.9,180.6 512,182"/><path d="M308,166C313.1,164.1 321.6,163.1 330,158C338.4,152.9 337.9,151 344,144C350.1,137 349.9,135.5 356,128C362.1,120.5 363.5,119.9 370,112C376.5,104.1 380.3,102.4 384,94C387.7,85.6 384.1,83.9 386,76C387.9,68.1 387.8,67.5 392,60C396.2,52.5 397.5,50.1 404,44C410.5,37.9 411.6,40.5 420,34C428.4,27.5 433.9,22.5 440,16C446.1,9.5 444.6,8.3 446,6"/><path d="M380,140C380.5,143.7 384.3,147.6 382,156C379.7,164.4 374.2,167.6 370,176C365.8,184.4 365.9,183.6 364,192C362.1,200.4 362.5,207.3 362,212"/><path d="M396,148C396.5,153.1 398.9,160.2 398,170C397.1,179.8 391.5,180.7 392,190C392.5,199.3 396.3,202.5 400,210C403.7,217.5 404.3,214.3 408,222C411.7,229.7 414.1,238.1 416,243"/><path d="M416,168C419.3,165.2 424.9,159.7 430,156C435.1,152.3 436.1,152.9 438,152"/><path d="M430,218C427.7,213.8 421.4,208.9 420,200C418.6,191.1 424.9,187.5 424,180C423.1,172.5 417.9,170.8 416,168"/><path d="M480,152C479.1,156.2 478.3,163.5 476,170C473.7,176.5 471.4,177.7 470,180"/><path d="M20,279C22.8,283.2 27.3,288.1 32,297C36.7,305.9 35.8,309.5 40,317C44.2,324.5 43.9,326.7 50,329C56.1,331.3 59,326.5 66,327C73,327.5 74.4,328.7 80,331C85.6,333.3 83.9,335.1 90,337C96.1,338.9 99,339.9 106,339C113,338.1 113,333.5 120,333C127,332.5 128.5,334.2 136,337C143.5,339.8 144.1,342.2 152,345C159.9,347.8 159.7,347.8 170,349C180.3,350.2 189.9,349.8 196,350"/><path d="M50,329C50,332.3 46.3,336.5 50,343C53.7,349.5 60.9,351.4 66,357C71.1,362.6 72,360.9 72,367C72,373.1 68.8,375.3 66,383C63.2,390.7 61.4,396 60,400"/><path d="M220,365C224.7,361.3 233,357.9 240,349C247,340.1 248.1,336.3 250,327C251.9,317.7 247.1,314.6 248,309C248.9,303.4 252.6,304.4 254,303"/><path d="M250,327C252.3,331.2 255.3,338.5 260,345C264.7,351.5 267.7,352.7 270,355"/><path d="M244,365C247.7,367.8 253.5,371.4 260,377C266.5,382.6 267.3,383.6 272,389C276.7,394.4 278.1,397.4 280,400"/><path d="M370,243C374.7,240.7 383,237.2 390,233C397,228.8 397.7,226.9 400,225"/><path d="M362,213C362.9,206.9 362.7,197.3 366,187C369.3,176.7 371.8,176 376,169C380.2,162 382.1,159.8 384,157"/><path d="M420,253C421.4,246.9 423.7,234 426,227C428.3,220 431.4,228.6 430,223C428.6,217.4 423.3,212.3 420,203C416.7,193.7 415.1,192.3 416,183C416.9,173.7 422.1,167.7 424,163"/><path d="M426,281C429.3,278.2 434.4,275.5 440,269C445.6,262.5 443,258.6 450,253C457,247.4 458.3,245.5 470,245C481.7,244.5 490.2,250.5 500,251C509.8,251.5 509.2,247.9 512,247"/><path d="M470,373C473.3,369.3 479.3,365.4 484,357C488.7,348.6 487.2,343.1 490,337C492.8,330.9 494.6,332.4 496,331"/><path d="M426,227C429.3,223.7 432.1,220 440,213C447.9,206 450.7,203.1 460,197C469.3,190.9 467.9,190.7 480,187C492.1,183.3 504.5,182.4 512,181"/><path d="M548,30C551.3,32.3 554.5,36.3 562,40C569.5,43.7 573.9,41.8 580,46C586.1,50.2 583.3,51.5 588,58C592.7,64.5 595.3,68.4 600,74C604.7,79.6 604.7,80.6 608,82C611.3,83.4 613.1,77.2 614,80C614.9,82.8 611.1,89.8 612,94C612.9,98.2 613.3,97.5 618,98C622.7,98.5 624.1,99.3 632,96C639.9,92.7 642.7,89.6 652,84C661.3,78.4 662.7,76.7 672,72C681.3,67.3 681.3,67 692,64C702.7,61 706.3,60.9 718,59C729.7,57.1 734.5,56.2 742,56C749.5,55.8 744.9,57.5 750,58C755.1,58.5 757,58.2 764,58C771,57.8 773.5,56.5 780,57C786.5,57.5 786.9,57.9 792,60C797.1,62.1 796.4,62.3 802,66C807.6,69.7 809.9,70.9 816,76C822.1,81.1 822.4,81.9 828,88C833.6,94.1 834.4,94.5 840,102C845.6,109.5 846.9,112.1 852,120C857.1,127.9 857.3,127.6 862,136C866.7,144.4 867.8,147.1 872,156C876.2,164.9 877.2,167.5 880,174C882.8,180.5 883.1,181.7 884,184"/><path d="M548,30C547.5,25.8 547.9,19 546,12C544.1,5 541.4,2.8 540,0"/><path d="M580,46C583.7,44.1 591.8,37.5 596,38C600.2,38.5 594.3,44.7 598,48C601.7,51.3 604.1,51.5 612,52C619.9,52.5 622.7,51.4 632,50C641.3,48.6 644.5,45.5 652,46C659.5,46.5 661.2,50.6 664,52"/><path d="M618,98C618.5,103.1 620,110.2 620,120C620,129.8 616.1,132.5 618,140C619.9,147.5 626.1,145.2 628,152C629.9,158.8 626.5,165 626,169"/><path d="M626,169C628.3,166 629.9,160.4 636,156C642.1,151.6 645.5,150 652,150C658.5,150 660.3,158.3 664,156C667.7,153.7 665.2,144.7 668,140C670.8,135.3 674.1,136.9 676,136"/><path d="M764,58C762.6,53.8 762.7,48.9 758,40C753.3,31.1 751.5,27.5 744,20C736.5,12.5 733.5,8 726,8C718.5,8 716.2,15.8 712,20C707.8,24.2 708.9,24.6 708,26"/><path d="M798,62C796.6,56.9 792.9,52.1 792,40C791.1,27.9 792.6,19.3 794,10C795.4,0.7 797.1,2.3 798,0"/><path d="M846,76C849.7,71.8 853.6,65 862,58C870.4,51 872.2,54.4 882,46C891.8,37.6 905.4,32.7 904,22C902.6,11.3 882.5,5.1 876,0"/><path d="M904,22C908.2,26.2 913.1,30.2 922,40C930.9,49.8 930.3,55.1 942,64C953.7,72.9 960.3,75.2 972,78C983.7,80.8 986.4,81.1 992,76C997.6,70.9 988.5,63 996,56C1003.5,49 1017.5,48.3 1024,46"/><path d="M992,76C989.7,80.7 979.7,85.7 982,96C984.3,106.3 995,112.5 1002,120C1009,127.5 1009.7,126.1 1012,128"/><path d="M770,82C772.3,79.2 774.9,73.5 780,70C785.1,66.5 786.9,67.5 792,67C797.1,66.5 799.7,67.8 802,68"/><path d="M840,120C836.3,122.8 833.3,128.3 824,132C814.7,135.7 807,135.8 800,136C793,136.2 795.4,133.7 794,133"/><path d="M524,96C525.9,98.8 526.9,103.3 532,108C537.1,112.7 542.3,109.5 546,116C549.7,122.5 541.9,132.3 548,136C554.1,139.7 566.4,132.9 572,132"/><path d="M512,184C514.8,184.5 517,184.6 524,186C531,187.4 533.1,186.3 542,190C550.9,193.7 555,199.7 562,202C569,204.3 565.9,201.4 572,200C578.1,198.6 579.6,199.7 588,196C596.4,192.3 603.3,186.8 608,184"/><path d="M578,172C581.3,172 586.9,166.9 592,172C597.1,177.1 598.1,188.9 600,194"/><path d="M572,200C569.7,202.8 566.7,206.4 562,212C557.3,217.6 556.7,216.8 552,224C547.3,231.2 544.3,238.6 542,243"/><path d="M934,134C934.9,138.2 933.8,145.9 938,152C942.2,158.1 944.1,158.6 952,160C959.9,161.4 965.9,158 972,158C978.1,158 976.6,159.5 978,160"/><path d="M974,160C973.5,163.7 970.1,170.4 972,176C973.9,181.6 979.7,182.1 982,184"/><path d="M884,184C885.9,187.7 887.8,194.9 892,200C896.2,205.1 899.2,203.2 902,206C904.8,208.8 897,209.7 904,212C911,214.3 920.8,212.7 932,216C943.2,219.3 942.7,224.6 952,226C961.3,227.4 967.3,222.9 972,222"/><path d="M852,160C852.5,163.3 855.4,169.3 854,174C852.6,178.7 846.5,177.7 846,180C845.5,182.3 850.6,183.1 852,184"/><path d="M512,253C516.7,253.5 522.7,252.7 532,255C541.3,257.3 542.7,260.7 552,263C561.3,265.3 562.2,262.9 572,265C581.8,267.1 584.7,272.5 594,272C603.3,271.5 604.5,266 612,263C619.5,260 622.7,259.9 626,259"/><path d="M594,272C594.9,277.8 597.5,286.5 598,297C598.5,307.5 602.1,310.9 596,317C589.9,323.1 579.9,320.2 572,323C564.1,325.8 571.3,324.8 562,329C552.7,333.2 543.7,337.3 532,341C520.3,344.7 516.7,344.1 512,345"/><path d="M532,293C539,288.8 547.5,279.9 562,275C576.5,270.1 586.5,272.7 594,272"/><path d="M544,287C548.2,289.3 555,293.3 562,297C569,300.7 571.2,301.6 574,303"/><path d="M562,329C562.9,333.2 563.7,341.9 566,347C568.3,352.1 577.6,347.3 572,351C566.4,354.7 556,359.3 542,363C528,366.7 519,366.1 512,367"/><path d="M604,327C607.7,330.3 615.3,334 620,341C624.7,348 621.2,350.9 624,357C626.8,363.1 629.2,361.4 632,367C634.8,372.6 633.2,374.5 636,381C638.8,387.5 641.2,390.6 644,395C646.8,399.4 647.1,398.8 648,400"/><path d="M712,213C713.4,216.7 718,222.5 718,229C718,235.5 717.1,236.3 712,241C706.9,245.7 701.1,242.5 696,249C690.9,255.5 689.1,260.6 690,269C690.9,277.4 693.5,279.4 700,285C706.5,290.6 712.4,287.4 718,293C723.6,298.6 721.9,302.9 724,309C726.1,315.1 726.3,316.7 727,319"/><path d="M760,197C759.8,199.8 763.2,202.9 759,209C754.8,215.1 746.4,217.4 742,223C737.6,228.6 737.7,228.3 740,233C742.3,237.7 743.1,237.9 752,243C760.9,248.1 768.7,248.9 778,255C787.3,261.1 784.1,262.9 792,269C799.9,275.1 802.7,275.4 812,281C821.3,286.6 823.6,288.3 832,293C840.4,297.7 844.3,298.2 848,301C851.7,303.8 848,304.1 848,305"/><path d="M804,312C807.3,313.6 814.3,314.1 818,319C821.7,323.9 820.9,326.9 820,333C819.1,339.1 814.5,339.4 814,345C813.5,350.6 818.5,351.9 818,357C817.5,362.1 810.6,361.4 812,367C813.4,372.6 819.3,375.4 824,381C828.7,386.6 830.6,386.6 832,391C833.4,395.4 830.5,397.9 830,400"/><path d="M832,391C836.7,386.8 842.7,380.9 852,373C861.3,365.1 862.7,361.7 872,357C881.3,352.3 880.3,356.3 892,353C903.7,349.7 911.7,350 922,343C932.3,336 929.9,331.9 936,323C942.1,314.1 945.2,309.2 948,305"/><path d="M920,343C920.9,346.3 923.5,350 924,357C924.5,364 922.5,369.3 922,373"/><path d="M936,305C942.1,305.5 952.2,307 962,307C971.8,307 973.8,298 978,305C982.2,312 979.1,324.9 980,337C980.9,349.1 982.5,347.7 982,357C981.5,366.3 981.3,368.6 978,377C974.7,385.4 971.3,387.6 968,393C964.7,398.4 964.9,398.4 964,400"/><path d="M956,317C959.7,317.5 963.6,316.2 972,319C980.4,321.8 979.9,324.8 992,329C1004.1,333.2 1016.5,335.1 1024,337"/><path d="M978,305C977.5,299.4 975.1,289.9 976,281C976.9,272.1 977.3,273.5 982,267C986.7,260.5 992.7,256.3 996,253"/><path d="M902,205C902.9,206.9 899,210.7 906,213C913,215.3 922.2,212.2 932,215C941.8,217.8 938.7,223.6 948,225C957.3,226.4 966.4,221.9 972,221"/><path d="M696,337C697.9,340.3 701.2,346.3 704,351C706.8,355.7 707.1,355.6 708,357"/><path d="M702,369L712,373"/><path d="M943,68C947.7,68.9 953.7,70.1 963,72C972.3,73.9 976.5,76.9 983,76C989.5,75.1 986.3,72.7 991,68C995.7,63.3 995.5,59.7 1003,56C1010.5,52.3 1014.6,54.8 1023,52C1031.4,49.2 1034.3,46.8 1039,44C1043.7,41.2 1042.1,40.9 1043,40"/><path d="M983,76C983.9,81.6 983.3,89.7 987,100C990.7,110.3 996.2,115.3 999,120"/><path d="M979,52C982.7,52.9 989.4,55.1 995,56C1000.6,56.9 1001.1,56 1003,56"/><path d="M1051,60C1056.1,64.7 1062.3,73 1073,80C1083.7,87 1088.6,86.3 1097,90C1105.4,93.7 1106.2,94.6 1109,96"/><path d="M1069,76C1075.1,71.8 1085.7,62.2 1095,58C1104.3,53.8 1105.7,58 1109,58"/><path d="M1115,52C1118.7,55.3 1124.5,64.1 1131,66C1137.5,67.9 1134.1,59.5 1143,60C1151.9,60.5 1162.9,61 1169,68C1175.1,75 1166.2,77.9 1169,90C1171.8,102.1 1178.2,113 1181,120"/><path d="M1241,89C1241.9,92.5 1241.3,97.7 1245,104C1248.7,110.3 1254.2,113.2 1257,116"/><path d="M1283,86C1288.6,86.9 1295.8,86.3 1307,90C1318.2,93.7 1324.9,95 1331,102C1337.1,109 1333,111.1 1333,120C1333,128.9 1331,128.3 1331,140C1331,151.7 1330.7,156 1333,170C1335.3,184 1337.3,183 1341,200C1344.7,217 1347.1,233 1349,243"/><path d="M1329,58C1329.9,64.1 1332.1,73.7 1333,84C1333.9,94.3 1333,97.8 1333,102"/><path d="M1349,12C1348.5,17.1 1346.1,27.5 1347,34C1347.9,40.5 1351.6,38.6 1353,40"/><path d="M1315,178C1305.2,179.2 1283.3,177.9 1273,183C1262.7,188.1 1273.3,191.4 1271,200C1268.7,208.6 1267.2,211.6 1263,220C1258.8,228.4 1255.3,232.3 1253,236"/><path d="M1027,12C1029.8,12.9 1034.8,14.1 1039,16C1043.2,17.9 1043.6,19.1 1045,20"/><path d="M1023,28C1022.1,26.6 1016.2,24.3 1019,22C1021.8,19.7 1031.3,18.9 1035,18"/><path d="M1115,0C1115.9,1.9 1119.5,2.9 1119,8C1118.5,13.1 1115.3,16.9 1113,22C1110.7,27.1 1109.9,28.1 1109,30"/><path d="M1183,10C1180.7,13.7 1177.7,23.2 1173,26C1168.3,28.8 1165.3,22.9 1163,22"/><path d="M1095,148C1096.4,150.8 1101,155.8 1101,160C1101,164.2 1097.3,161.3 1095,166C1092.7,170.7 1091,174.4 1091,180C1091,185.6 1095,185.3 1095,190C1095,194.7 1089.6,196.7 1091,200C1092.4,203.3 1098.7,203.1 1101,204"/><path d="M979,269C978.5,275.5 977,283.5 977,297C977,310.5 978.1,314.9 979,327C979.9,339.1 981.5,339.7 981,349C980.5,358.3 977.5,360.5 977,367C976.5,373.5 980.9,371.4 979,377C977.1,382.6 973.2,385.6 969,391C964.8,396.4 962.9,397.9 961,400"/><path d="M993,269C990.7,273.2 986.3,278.6 983,287C979.7,295.4 985.5,298 979,305C972.5,312 963.4,313.7 955,317C946.6,320.3 945.8,318.5 943,319"/><path d="M979,305C984.6,305 989,304.8 1003,305C1017,305.2 1030.6,298.5 1039,306C1047.4,313.5 1040.9,325.1 1039,337C1037.1,348.9 1034.7,347.7 1031,357C1027.3,366.3 1028.1,367 1023,377C1017.9,387 1012.3,394.6 1009,400"/><path d="M979,327C987.4,328.9 1001,332.2 1015,335C1029,337.8 1029.2,337.8 1039,339C1048.8,340.2 1052.8,339.8 1057,340"/><path d="M1031,269C1029.1,273.2 1026.7,278.6 1023,287C1019.3,295.4 1016.9,300.8 1015,305"/><path d="M1039,306C1042.7,308.6 1047.5,310.7 1055,317C1062.5,323.3 1064.5,328.3 1071,333C1077.5,337.7 1080.2,336.1 1083,337"/><path d="M1057,340C1058.4,344 1056.9,352.6 1063,357C1069.1,361.4 1072.3,356.9 1083,359C1093.7,361.1 1102.9,364.4 1109,366"/><path d="M1095,367C1094.1,371.7 1091.5,379.3 1091,387C1090.5,394.7 1092.5,397 1093,400"/><path d="M1119,337C1116.2,341.7 1112.6,350 1107,357C1101.4,364 1097.8,364.7 1095,367"/><path d="M1091,253C1101.3,254.9 1119.1,255.4 1135,261C1150.9,266.6 1148.7,268.6 1159,277C1169.3,285.4 1168.7,287.7 1179,297C1189.3,306.3 1193.2,309.1 1203,317C1212.8,324.9 1210.7,323.5 1221,331C1231.3,338.5 1234.9,341.5 1247,349C1259.1,356.5 1262.3,357.4 1273,363C1283.7,368.6 1282.3,366.5 1293,373C1303.7,379.5 1310.6,384.7 1319,391C1327.4,397.3 1326.7,397.9 1329,400"/><path d="M1193,231C1195.3,234.7 1196,238.1 1203,247C1210,255.9 1214.1,261.1 1223,269C1231.9,276.9 1230.7,278.7 1241,281C1251.3,283.3 1260.9,279.5 1267,279"/><path d="M1251,241C1251.9,245.7 1251.3,251.7 1255,261C1258.7,270.3 1260.5,270.3 1267,281C1273.5,291.7 1276.9,296.3 1283,307C1289.1,317.7 1291.1,315.3 1293,327C1294.9,338.7 1293.8,345.3 1291,357C1288.2,368.7 1285.2,367 1281,377C1276.8,387 1274.9,394.6 1273,400"/><path d="M1315,181C1305.2,181.5 1283.3,177.9 1273,183C1262.7,188.1 1274.3,193.2 1271,203C1267.7,212.8 1264.1,217.1 1259,225C1253.9,232.9 1251.3,234.2 1249,237"/><path d="M1331,157C1332.9,164 1336.2,173.9 1339,187C1341.8,200.1 1339.3,196.7 1343,213C1346.7,229.3 1353.6,237.4 1355,257C1356.4,276.6 1349.9,283 1349,297C1348.1,311 1350.1,304.2 1351,317C1351.9,329.8 1352.5,343.8 1353,352"/><path d="M1337,213C1333.7,219.5 1327.2,229.3 1323,241C1318.8,252.7 1319.9,257.9 1319,263"/><path d="M1221,331C1230.8,329.6 1245.7,327.8 1263,325C1280.3,322.2 1281,318.5 1295,319C1309,319.5 1309.5,319.3 1323,327C1336.5,334.7 1339,345.5 1353,352C1367,358.5 1363.9,356.2 1383,355C1402.1,353.8 1422.9,348.9 1435,347"/><path d="M1231,345C1230.1,347.8 1227.5,349.5 1227,357C1226.5,364.5 1221.5,373.7 1229,377C1236.5,380.3 1246.9,371 1259,371C1271.1,371 1266.1,372.8 1281,377C1295.9,381.2 1306.2,394.8 1323,389C1339.8,383.2 1346,360.6 1353,352"/><path d="M1435,333C1435,336.3 1435.5,339.1 1435,347C1434.5,354.9 1435.8,357.7 1433,367C1430.2,376.3 1426.3,379.3 1423,387C1419.7,394.7 1419.9,397 1419,400"/><path d="M1435,347L1455,357"/><path d="M1435,347C1437.8,353.1 1442.3,365.1 1447,373C1451.7,380.9 1453.1,379.1 1455,381"/><path d="M1103,249L1109,237"/><path d="M1081,200C1083.8,198.6 1088.8,191.9 1093,194C1097.2,196.1 1092.9,205 1099,209C1105.1,213 1114.1,211.5 1119,211C1123.9,210.5 1119.8,207.9 1120,207"/><path d="M1473,10C1487.5,11.2 1512.6,10.3 1535,15C1557.4,19.7 1547.5,20 1569,30C1590.5,40 1600.9,46.8 1627,58C1653.1,69.2 1653.9,79.4 1681,78C1708.1,76.6 1723.4,61.1 1743,52C1762.6,42.9 1759.9,42 1765,39"/><path d="M1485,12C1491.1,20.4 1500.3,33.5 1511,48C1521.7,62.5 1521.7,67.2 1531,74C1540.3,80.8 1542.6,73.7 1551,77C1559.4,80.3 1557.2,84 1567,88C1576.8,92 1581.8,87.5 1593,94C1604.2,100.5 1605.2,112.7 1615,116C1624.8,119.3 1629.4,103.3 1635,108C1640.6,112.7 1637.1,124.8 1639,136C1640.9,147.2 1638.8,149.5 1643,156C1647.2,162.5 1651.4,159.3 1657,164C1662.6,168.7 1664.2,167.6 1667,176C1669.8,184.4 1664.8,187.9 1669,200C1673.2,212.1 1680.8,218 1685,228C1689.2,238 1686.5,239.5 1687,243"/><path d="M1455,30C1456.4,31.9 1460.5,31.7 1461,38C1461.5,44.3 1455.6,46.3 1457,57C1458.4,67.7 1464.7,77.7 1467,84"/><path d="M1569,30C1569.5,37 1571,46.5 1571,60C1571,73.5 1569.5,81.5 1569,88"/><path d="M1599,8L1591,38"/><path d="M1595,74C1591.7,80.5 1583.3,91.3 1581,102C1578.7,112.7 1585.9,107.9 1585,120C1584.1,132.1 1580.3,140 1577,154C1573.7,168 1574.3,169.5 1571,180C1567.7,190.5 1565.3,184.3 1563,199C1560.7,213.7 1561.5,232.7 1561,243"/><path d="M1595,74C1600.1,76.3 1609.5,87.7 1617,84C1624.5,80.3 1624.7,64.1 1627,58"/><path d="M1563,196C1567.7,192.3 1574.6,186.1 1583,180C1591.4,173.9 1591.5,173.3 1599,170C1606.5,166.7 1611.3,166.9 1615,166"/><path d="M1489,116C1492.7,116.9 1494.7,112.8 1505,120C1515.3,127.2 1526.5,140.7 1533,147"/><path d="M1549,182L1563,197"/><path d="M1529,0L1534,14"/><path d="M1534,14L1545,0"/><path d="M1637,0C1639.3,5.1 1641.4,15.5 1647,22C1652.6,28.5 1646.5,29.4 1661,28C1675.5,26.6 1692.7,16 1709,16C1725.3,16 1721.2,22.9 1731,28C1740.8,33.1 1743.1,35.4 1751,38C1758.9,40.6 1761.7,38.8 1765,39"/><path d="M1661,0L1641,26"/><path d="M1671,0C1672.4,5.6 1675.6,13.7 1677,24C1678.4,34.3 1675.6,33.7 1677,44C1678.4,54.3 1682.1,60.1 1683,68C1683.9,75.9 1681.5,75.7 1681,78"/><path d="M1713,0L1723,24"/><path d="M1727,26C1730.7,22.7 1735.1,18.1 1743,12C1750.9,5.9 1756.8,2.8 1761,0"/><path d="M1773,0C1773.5,3.7 1776.9,6.9 1775,16C1773.1,25.1 1767.3,33.6 1765,39"/><path d="M1765,39C1769.2,41.1 1776.5,41.7 1783,48C1789.5,54.3 1790,59.7 1793,66C1796,72.3 1794.1,68.5 1796,75C1797.9,81.5 1797.5,85.4 1801,94C1804.5,102.6 1804,102.2 1811,112C1818,121.8 1823.5,127.1 1831,136C1838.5,144.9 1836,143.5 1843,150C1850,156.5 1856.3,159.8 1861,164C1865.7,168.2 1862.5,167.1 1863,168"/><path d="M1796,75C1800,71.5 1803.9,65.1 1813,60C1822.1,54.9 1827.1,53.5 1835,53C1842.9,52.5 1840,50.8 1847,58C1854,65.2 1863.1,77 1865,84C1866.9,91 1857.8,78.7 1855,88C1852.2,97.3 1851.6,106.3 1853,124C1854.4,141.7 1861,148.6 1861,164C1861,179.4 1857.7,176.9 1853,190C1848.3,203.1 1845.2,207.6 1841,220C1836.8,232.4 1836.4,237.6 1835,243"/><path d="M1681,78C1684.3,82.2 1691.3,86.2 1695,96C1698.7,105.8 1692.8,108.8 1697,120C1701.2,131.2 1705.1,132.3 1713,144C1720.9,155.7 1724,156.9 1731,170C1738,183.1 1739.7,188.3 1743,200C1746.3,211.7 1742.7,210 1745,220C1747.3,230 1751.1,237.6 1753,243"/><path d="M1787,152C1786.5,156.2 1784.5,160.7 1785,170C1785.5,179.3 1788.1,180.3 1789,192C1789.9,203.7 1788.1,208.1 1789,220C1789.9,231.9 1792.1,237.6 1793,243"/><path d="M1843,58C1844.4,52.9 1847.1,46.7 1849,36C1850.9,25.3 1850.5,17.6 1851,12"/><path d="M1845,54C1849.7,52.1 1858.9,50.2 1865,46C1871.1,41.8 1867.7,40.2 1871,36C1874.3,31.8 1870.6,32.2 1879,28C1887.4,23.8 1899.5,24.5 1907,18C1914.5,11.5 1910.1,4.2 1911,0"/><path d="M1871,36L1859,26"/><path d="M1863,168C1871.9,160.1 1893.5,149.9 1901,134C1908.5,118.1 1895.5,116.3 1895,100C1894.5,83.7 1892.5,72.9 1899,64C1905.5,55.1 1912.7,58.3 1923,62C1933.3,65.7 1936.5,66.5 1943,80C1949.5,93.5 1945.4,106 1951,120C1956.6,134 1963.3,135.3 1967,140"/><path d="M1867,80C1871.2,82.3 1877.1,77.4 1885,90C1892.9,102.6 1894,118.6 1901,134C1908,149.4 1908,147.6 1915,156C1922,164.4 1924.5,161.6 1931,170C1937.5,178.4 1939.3,181.3 1943,192C1946.7,202.7 1941.4,205.7 1947,216C1952.6,226.3 1962.3,231.3 1967,236"/><path d="M1931,220C1933.8,217.2 1934.6,213.6 1943,208C1951.4,202.4 1961.4,198.8 1967,196"/><path d="M1855,190C1860.6,191.9 1865,193.8 1879,198C1893,202.2 1902.4,202.9 1915,208C1927.6,213.1 1927.9,213.5 1933,220C1938.1,226.5 1937.5,230.6 1937,236C1936.5,241.4 1932.4,241.4 1931,243"/><path d="M1875,144C1875.9,145.9 1876.7,151.1 1879,152C1881.3,152.9 1883.6,148.9 1885,148"/><path d="M1549,179C1552.3,183.7 1560.7,176.1 1563,199C1565.3,221.9 1561.8,242.9 1559,277C1556.2,311.1 1554.3,319.8 1551,345C1547.7,370.2 1547.8,375.7 1545,385C1542.2,394.3 1540.4,385 1539,385"/><path d="M1563,199L1575,157"/><path d="M1564,196C1568.4,192 1574.8,184.8 1583,179C1591.2,173.2 1591.5,174 1599,171C1606.5,168 1611.3,167.2 1615,166"/><path d="M1539,385L1521,399"/><path d="M1539,385L1575,400"/><path d="M1455,361C1459.7,365.7 1466.6,371.9 1475,381C1483.4,390.1 1487.3,395.6 1491,400"/><path d="M1583,352C1584.4,355.3 1583.4,358.3 1589,366C1594.6,373.7 1600,377.1 1607,385C1614,392.9 1616.2,396.5 1619,400"/><path d="M1617,287C1618.4,294.9 1619.7,307.9 1623,321C1626.3,334.1 1629.1,335.3 1631,343C1632.9,350.7 1631,351.4 1631,354"/><path d="M1643,157C1646.3,158.9 1651.4,159.9 1657,165C1662.6,170.1 1664.2,170.6 1667,179C1669.8,187.4 1665.3,190.7 1669,201C1672.7,211.3 1679,214.4 1683,223C1687,231.6 1681.3,235.4 1686,238C1690.7,240.6 1694.4,230.5 1703,234C1711.6,237.5 1713.7,243 1723,253C1732.3,263 1732.7,267.2 1743,277C1753.3,286.8 1759.5,288.5 1767,295C1774.5,301.5 1769.4,297.1 1775,305C1780.6,312.9 1784.5,320.1 1791,329C1797.5,337.9 1800.2,339.7 1803,343"/><path d="M1686,238C1688.1,242.4 1690.1,248.8 1695,257C1699.9,265.2 1697.7,263.7 1707,273C1716.3,282.3 1726.6,285.3 1735,297C1743.4,308.7 1739.7,314.6 1743,323C1746.3,331.4 1747.6,330.7 1749,333"/><path d="M1719,157C1722.7,161.7 1729.4,166.3 1735,177C1740.6,187.7 1740.7,192.7 1743,203C1745.3,213.3 1740.8,208.4 1745,221C1749.2,233.6 1754,239.3 1761,257C1768,274.7 1771.3,285.3 1775,297C1778.7,308.7 1776.5,304.7 1777,307"/><path d="M1675,312C1678.7,313.6 1682.6,317.8 1691,319C1699.4,320.2 1702.6,315.6 1711,317C1719.4,318.4 1718.1,321.7 1727,325C1735.9,328.3 1743.9,329.6 1749,331"/><path d="M1673,315C1673.9,320.1 1674.7,328.6 1677,337C1679.3,345.4 1683.5,343.1 1683,351C1682.5,358.9 1680.6,359.6 1675,371C1669.4,382.4 1662.7,393.2 1659,400"/><path d="M1699,355C1698.5,357.8 1701.2,359.5 1697,367C1692.8,374.5 1686.1,379.3 1681,387C1675.9,394.7 1676.4,397 1675,400"/><path d="M1741,352C1740.5,357.8 1741.3,365.8 1739,377C1736.7,388.2 1732.9,394.6 1731,400"/><path d="M1787,157C1787,161.7 1785.6,159.3 1787,177C1788.4,194.7 1791.6,211.5 1793,233C1794.4,254.5 1791.1,253.1 1793,269C1794.9,284.9 1796.3,292.1 1801,301C1805.7,309.9 1810.2,305.6 1813,307"/><path d="M1861,165C1857.3,174.3 1851.1,185.9 1845,205C1838.9,224.1 1840.6,229.3 1835,247C1829.4,264.7 1826.1,267 1821,281C1815.9,295 1816.7,292.1 1813,307C1809.3,321.9 1806.9,336.1 1805,345"/><path d="M1861,165L1853,157"/><path d="M1861,165L1875,157"/><path d="M1837,245C1847.3,234.3 1876.8,211.8 1881,199C1885.2,186.2 1861.1,192.1 1855,190"/><path d="M1881,199C1886.6,201.8 1893.3,204.9 1905,211C1916.7,217.1 1923.5,219.4 1931,225C1938.5,230.6 1936.1,228.9 1937,235C1937.9,241.1 1938.7,243.1 1935,251C1931.3,258.9 1931.3,259.2 1921,269C1910.7,278.8 1897.1,282.7 1891,293C1884.9,303.3 1902.9,304.6 1895,313C1887.1,321.4 1873.3,319.9 1857,329C1840.7,338.1 1832.5,346.6 1825,352"/><path d="M1895,313C1890.3,317.7 1882.5,324.1 1875,333C1867.5,341.9 1865.8,346.8 1863,351"/><path d="M1825,352C1827.3,355.5 1832.2,361.2 1835,367C1837.8,372.8 1837.9,369.3 1837,377C1836.1,384.7 1832.4,394.6 1831,400"/><path d="M1815,361L1835,367"/><path d="M1931,225C1931.9,221.7 1926.6,218 1935,211C1943.4,204 1959.5,198.7 1967,195"/><path d="M1935,211C1934.1,207.7 1933.8,204.9 1931,197C1928.2,189.1 1927.2,186.3 1923,177C1918.8,167.7 1915.3,161.7 1913,157"/><path d="M1921,269C1920.5,270.4 1920.9,274.1 1919,275C1917.1,275.9 1914.4,273.5 1913,273"/><path d="M1895,313C1903.4,310.2 1914.2,311.3 1931,301C1947.8,290.7 1958.6,276.5 1967,269"/><path d="M1959,187L1955,197"/><path d="M1963,187L1967,193"/><path d="M2067.8,166.9C2067,159.6 2058.8,152.7 2064.4,135.8C2070,118.9 2082.3,108.9 2092,94.4C2101.7,79.9 2096.2,83.4 2105.8,73.8C2115.4,64.2 2124,59.5 2133.3,53.1C2142.6,46.7 2142.9,47.8 2145.8,46.2"/><path d="M2067.8,177.2C2054.1,180 2032.5,185.3 2009.2,189.3C1985.9,193.3 1983.9,190.8 1967.8,194.4C1951.7,198 1948.2,200.8 1940.2,204.8C1932.2,208.8 1934.1,205.3 1933.3,211.7C1932.5,218.1 1937.6,222.7 1936.8,232.4C1936,242.1 1931.5,248.3 1929.9,253.1"/><path d="M2067.8,166.9C2075.1,167.7 2080.7,171.1 2098.9,170.3C2117.1,169.5 2134.9,165 2145.8,163.4"/><path d="M2067.8,177.2C2073.4,186.9 2082.3,195.3 2092,218.6C2101.7,241.9 2104.4,249.9 2109.2,277.2C2114,304.5 2113.5,314.1 2112.7,335.8C2111.9,357.5 2107.4,362.2 2105.8,370.3"/><path d="M2092,218.6L2145.8,225.5"/><path d="M2067.8,166.9C2071.8,156.4 2077,138.9 2085.1,122C2093.2,105.1 2094.2,90.4 2102.3,94.4C2110.4,98.4 2110.8,122.4 2119.6,139.3C2128.4,156.2 2135.4,160.5 2140.2,166.9"/><path d="M2060.9,118.6C2067.3,121.8 2071.6,123.6 2088.5,132.4C2105.4,141.2 2122.8,150.9 2133.3,156.5"/><path d="M1992,194.4C1992.8,199.2 1988.2,207 1995.4,215.1C2002.6,223.2 2011.7,223.3 2023,228.9C2034.3,234.5 2038.9,236.9 2043.7,239.3"/><path d="M1988.5,204.8C1989.3,210.4 1995.2,216 1992,228.9C1988.8,241.8 1978.7,252.7 1974.7,260"/><path d="M2023,60C2027.8,58.4 2030.8,53.9 2043.7,53.1C2056.6,52.3 2065.3,50.1 2078.2,56.5C2091.1,62.9 2094.1,75.1 2098.9,80.7"/><path d="M1898.9,63.4C1903.7,62.6 1910,57.6 1919.6,60C1929.2,62.4 1933,62.6 1940.2,73.8C1947.4,85 1945.8,92.9 1950.6,108.2C1955.4,123.5 1952.1,129.2 1960.9,139.3C1969.7,149.4 1977.2,149.7 1988.5,151.3C1999.8,152.9 2000.4,150.6 2009.2,146.2C2018,141.8 2026.4,138.8 2026.4,132.4C2026.4,126 2013.2,121.8 2009.2,118.6"/><path d="M2009.2,11.7C2015.6,10.1 2024.7,4.8 2036.8,4.8C2048.9,4.8 2047.2,7.7 2060.9,11.7C2074.6,15.7 2087.3,19.6 2095.4,22"/><path d="M2078.2,349.6C2072.6,346.4 2062.9,345.5 2054,335.8C2045.1,326.1 2048.2,306.6 2040.2,308.2C2032.2,309.8 2024.4,334.6 2019.6,342.7"/><path d="M2145.8,315.1C2139.7,310.3 2133,305.6 2119.6,294.4C2106.2,283.2 2095.8,273.3 2088.5,266.9"/><path d="M2074.7,308.2C2066.7,314.6 2053.1,326.9 2040.2,335.8C2027.3,344.7 2024.4,343.8 2019.6,346.2"/></g>
<g fill="none" stroke="#b58abb" stroke-opacity=".72" stroke-width=".9" stroke-dasharray="5 1.5 1 1.5"><path d="M0,102C4.3,101.3 17.7,99.8 26,98C34.3,96.2 44,93 50,91C56,89 63,92.5 62,86C61,79.5 47.3,59 44,52C40.7,45 42.3,45.3 42,44"/><path d="M62,86C63,89 66.7,97 68,104C69.3,111 69,118.7 70,128C71,137.3 72.3,151.3 74,160C75.7,168.7 78,173.7 80,180C82,186.3 89.3,193.3 86,198C82.7,202.7 67.7,204.7 60,208C52.3,211.3 46.7,215 40,218C33.3,221 26.7,224 20,226C13.3,228 3.3,229.3 0,230"/><path d="M86,198C87.7,200.3 92.3,207 96,212C99.7,217 102.7,226.5 108,228C113.3,229.5 119.3,222.7 128,221C136.7,219.3 148,218.3 160,218C172,217.7 189.3,219.7 200,219C210.7,218.3 217.3,216.2 224,214C230.7,211.8 233.7,210.7 240,206C246.3,201.3 258.3,189.3 262,186"/><path d="M268,170C271.7,173.7 282,183.3 290,192C298,200.7 307.7,216.5 316,222C324.3,227.5 332.3,224.2 340,225C347.7,225.8 358.3,226.7 362,227"/><path d="M342,61C346.7,61.8 360.3,62.8 370,66C379.7,69.2 391,76 400,80C409,84 415.7,86.7 424,90C432.3,93.3 441.3,95.7 450,100C458.7,104.3 468.3,113.7 476,116C483.7,118.3 490,115.3 496,114C502,112.7 509.3,109 512,108"/><path d="M450,100C452.7,96.7 460.3,86.7 466,80C471.7,73.3 476.3,65.7 484,60C491.7,54.3 507.3,48.3 512,46"/><path d="M108,227C110,231.3 118,246 120,253C122,260 118.3,263.7 120,269C121.7,274.3 127,279 130,285C133,291 134.3,298.3 138,305C141.7,311.7 148.3,319 152,325C155.7,331 158.7,335.7 160,341C161.3,346.3 161.3,351 160,357C158.7,363 153,369.8 152,377C151,384.2 153.7,396.2 154,400"/><path d="M366,225L372,209"/><path d="M420,261C423.3,258 433.3,250.3 440,243C446.7,235.7 452.7,223.3 460,217C467.3,210.7 475.3,208.3 484,205C492.7,201.7 507.3,198.3 512,197"/><path d="M512,88C515.3,86 525,79 532,76C539,73 549.5,70 554,70C558.5,70 557.3,71.7 559,76C560.7,80.3 562.5,89.3 564,96C565.5,102.7 566,109.3 568,116C570,122.7 573.7,131 576,136C578.3,141 578,143.3 582,146C586,148.7 593.7,150.3 600,152C606.3,153.7 616,154 620,156C624,158 623,161.8 624,164C625,166.2 625.7,168.2 626,169"/><path d="M570,112C570.3,110.3 569.7,105.3 572,102C574.3,98.7 579.3,94.7 584,92C588.7,89.3 595.3,88 600,86C604.7,84 609,83 612,80C615,77 614,70.3 618,68C622,65.7 629.7,68 636,66C642.3,64 651,60.3 656,56C661,51.7 663,45.3 666,40C669,34.7 672,29.3 674,24C676,18.7 676.7,11.7 678,8C679.3,4.3 679,2.7 682,2C685,1.3 689,3 696,4C703,5 716.7,8 724,8C731.3,8 735.3,5.3 740,4C744.7,2.7 750,0.7 752,0"/><path d="M726,8C726.7,10.7 727.3,19 730,24C732.7,29 739.3,33 742,38C744.7,43 742.3,50.7 746,54C749.7,57.3 760.3,56.3 764,58C767.7,59.7 768,60.3 768,64C768,67.7 766.7,76 764,80C761.3,84 754.7,84 752,88C749.3,92 748.3,100 748,104C747.7,108 751,109 750,112C749,115 745.7,120.2 742,122C738.3,123.8 730.3,120.7 728,123C725.7,125.3 727.3,132.5 728,136C728.7,139.5 729.3,141 732,144C734.7,147 740,152.3 744,154C748,155.7 752,152 756,154C760,156 761.7,163.7 768,166C774.3,168.3 788.3,165.7 794,168C799.7,170.3 799.7,175.7 802,180C804.3,184.3 806.3,189.8 808,194C809.7,198.2 810,203.7 812,205C814,206.3 817.3,204.2 820,202C822.7,199.8 824.7,194.3 828,192C831.3,189.7 836.7,189.3 840,188C843.3,186.7 846.7,184.7 848,184"/><path d="M728,136C725.3,138 716.7,144 712,148C707.3,152 704.3,155.7 700,160C695.7,164.3 690.3,170 686,174C681.7,178 677.7,181.7 674,184C670.3,186.3 666.7,184 664,188C661.3,192 659.3,202.7 658,208C656.7,213.3 655.7,214.2 656,220C656.3,225.8 659.3,239.2 660,243"/><path d="M656,223C657,226 660.8,235.3 662,241C663.2,246.7 664,249.7 663,257C662,264.3 657.7,276.3 656,285C654.3,293.7 653.3,300.3 653,309C652.7,317.7 653.7,328.3 654,337C654.3,345.7 655.7,353.7 655,361C654.3,368.3 652.5,375.7 650,381C647.5,386.3 643.7,389.8 640,393C636.3,396.2 630,398.8 628,400"/><path d="M655,361C660.5,360.8 678.5,359.8 688,360C697.5,360.2 705.3,360.2 712,362C718.7,363.8 724,367.5 728,371C732,374.5 734.3,378.7 736,383C737.7,387.3 737.7,394.7 738,397"/><path d="M1145,116C1146.3,114.7 1150,111.3 1153,108C1156,104.7 1159.7,98.3 1163,96C1166.3,93.7 1169.7,94.5 1173,94C1176.3,93.5 1178,93.1 1183,93C1188,92.9 1199.7,93.5 1203,93.6"/><path d="M1203,79C1204.3,78.8 1210,79.8 1211,78C1212,76.2 1209.8,72.2 1209,68C1208.2,63.8 1203.7,57 1206,53C1208.3,49 1215.5,47.8 1223,44C1230.5,40.2 1241.7,34.5 1251,30C1260.3,25.5 1270.3,18.3 1279,17C1287.7,15.7 1296,19.7 1303,22C1310,24.3 1317.3,30.5 1321,31C1324.7,31.5 1319,24 1325,25C1331,26 1347.3,37.8 1357,37C1366.7,36.2 1376,23.8 1383,20C1390,16.2 1398,17.3 1399,14C1400,10.7 1390.7,2.3 1389,0"/><path d="M1171,295C1172.7,295 1177.3,298.7 1181,295C1184.7,291.3 1188.3,276.7 1193,273C1197.7,269.3 1204,271 1209,273C1214,275 1220,280.3 1223,285C1226,289.7 1224.3,298 1227,301C1229.7,304 1236.3,300.7 1239,303C1241.7,305.3 1239,312.7 1243,315C1247,317.3 1259.7,314 1263,317C1266.3,320 1259.7,330 1263,333C1266.3,336 1278,332.7 1283,335C1288,337.3 1286.3,344 1293,347C1299.7,350 1316,350.3 1323,353C1330,355.7 1332.3,359.3 1335,363C1337.7,366.7 1335.7,373 1339,375C1342.3,377 1351.7,370.8 1355,375C1358.3,379.2 1358.3,395.8 1359,400"/><path d="M1171,295C1168.7,295.3 1160.7,295.7 1157,297C1153.3,298.3 1150.3,300 1149,303C1147.7,306 1146.7,310.3 1149,315C1151.3,319.7 1157.3,325 1163,331C1168.7,337 1182.3,346 1183,351C1183.7,356 1172,361.2 1167,361C1162,360.8 1158,351.2 1153,350C1148,348.8 1139.8,349.5 1137,354C1134.2,358.5 1137.3,370.8 1136,377C1134.7,383.2 1131.5,387.2 1129,391C1126.5,394.8 1122.3,398.5 1121,400"/><path d="M1075,319C1078.3,320.3 1088.7,324.3 1095,327C1101.3,329.7 1107.3,332 1113,335C1118.7,338 1125.2,341.3 1129,345C1132.8,348.7 1134.8,355 1136,357"/><path d="M1815,0L1818,12"/><path d="M1818,86C1819.8,85.7 1824.5,82.7 1829,84C1833.5,85.3 1840.3,90 1845,94C1849.7,98 1853.3,102.7 1857,108C1860.7,113.3 1864.3,119.7 1867,126C1869.7,132.3 1871.7,140.3 1873,146C1874.3,151.7 1873,156 1875,160C1877,164 1880,166.3 1885,170C1890,173.7 1898.7,178 1905,182C1911.3,186 1918.7,189.7 1923,194C1927.3,198.3 1929,204.3 1931,208C1933,211.7 1932,212.3 1935,216C1938,219.7 1946.3,225.5 1949,230C1951.7,234.5 1950.7,240.8 1951,243"/><path d="M1659,87C1659.2,89.3 1654,98.2 1660,101C1666,103.8 1686.2,102.8 1695,104C1703.8,105.2 1710,107.3 1713,108"/><path d="M1659,87C1657,88.2 1649.7,90.5 1647,94C1644.3,97.5 1644.7,102.7 1643,108C1641.3,113.3 1638,122 1637,126C1636,130 1639.3,130 1637,132C1634.7,134 1625.7,135.3 1623,138C1620.3,140.7 1620.3,145.2 1621,148C1621.7,150.8 1626.7,150.3 1627,155C1627.3,159.7 1624.3,168.5 1623,176C1621.7,183.5 1622.3,196 1619,200C1615.7,204 1605.7,197.3 1603,200C1600.3,202.7 1604.3,210.7 1603,216C1601.7,221.3 1599.7,227.5 1595,232C1590.3,236.5 1578.3,241.2 1575,243"/><path d="M1575,245C1573.7,245.7 1571.3,248.5 1567,249C1562.7,249.5 1552,246.7 1549,248C1546,249.3 1550,250.8 1549,257C1548,263.2 1547,276.7 1543,285C1539,293.3 1528,300 1525,307C1522,314 1526.7,322 1525,327C1523.3,332 1517,332 1515,337C1513,342 1514.7,352 1513,357C1511.3,362 1509.7,364 1505,367C1500.3,370 1491,373 1485,375C1479,377 1472,376.3 1469,379C1466,381.7 1469.3,388 1467,391C1464.7,394 1457,396 1455,397"/><path d="M1513,357L1521,400"/><path d="M1935,215C1937.3,217.3 1946.3,224.3 1949,229C1951.7,233.7 1951.3,238.7 1951,243C1950.7,247.3 1946.3,250.7 1947,255C1947.7,259.3 1951.7,265 1955,269C1958.3,273 1965,277.3 1967,279"/><path d="M2067.8,94.4C2064.9,96.1 2054.6,99 2050.6,104.8C2046.6,110.5 2045.1,119.1 2043.7,128.9C2042.3,138.7 2042,153.1 2042,163.4C2042,173.8 2041.1,182.4 2043.7,191C2046.3,199.6 2055.8,207 2057.5,215.1C2059.2,223.2 2056.3,234.1 2054,239.3C2051.7,244.5 2051.2,243.3 2043.7,246.2C2036.2,249.1 2018.4,253.1 2009.2,256.5C2000,259.9 1992,260 1988.5,266.9C1985,273.8 1988.5,292.7 1988.5,297.9"/><path d="M2067.8,94.4C2073,94.1 2091.4,92.7 2098.9,92.7C2106.4,92.7 2110.4,94.1 2112.7,94.4"/></g>
<g fill="none" stroke="#a97cae" stroke-opacity=".62" stroke-width="1.9" stroke-linejoin="round"><path d="M1613,0L1615,4 1627,9 1629,22 1619,46 1609,68 1601,70 1602,86 1599,92 1611,104 1615,110 1621,109 1620,98 1627,99 1629,94 1635,90 1636,80 1631,78 1632,60 1670,54 1683,67 1694,72 1701,96 1715,108 1735,106 1745,103 1745,94 1751,87 1757,88 1761,94 1782,87 1785,91 1801,90 1817,86 1818,79 1813,76 1816,68 1809,66 1805,52 1807,42 1803,22 1813,16 1827,12 1831,19 1847,20 1852,11 1861,8 1875,0"/><path d="M1935,0L1945,10 1959,19 1967,22"/><path d="M2145.8,72L2126.4,80.7 2114.4,94.4 2116.1,111.7 2129.9,123.8 2145.8,126.2"/><path d="M1933.3,-0.4L1950.6,13.4 1971.3,23.8 1992,16.9 2009.2,4.8 2012.7,-0.4"/><path d="M2126.4,-0.4L2133.3,15.1 2145.8,22"/><path d="M332,0C332.2,2.4 331.8,6 333,12C334.2,18 336.6,23.2 338,30C339.4,36.8 339.8,40.4 340,46C340.2,51.6 341.4,53.6 339,58C336.6,62.4 331.8,63.6 328,68C324.2,72.4 322.4,74.8 320,80C317.6,85.2 316.6,88.4 316,94C315.4,99.6 317.4,103.6 317,108C316.6,112.4 317.4,111.6 314,116C310.6,120.4 306.8,122.8 300,130C293.2,137.2 286.8,144.4 280,152C273.2,159.6 269.2,162.4 266,168C262.8,173.6 264,174.4 264,180C264,185.6 264.4,188.8 266,196C267.6,203.2 269.6,208 272,216C274.4,224 276.6,230.6 278,236C279.4,241.4 278.8,241.6 279,243"/><path d="M279,243C279.2,246.6 280.2,253.4 280,261C279.8,268.6 280,273 278,281C276,289 272.6,294.2 270,301C267.4,307.8 265,309.4 265,315C265,320.6 271,325 270,329C269,333 262.4,331.8 260,335C257.6,338.2 257.2,341.4 258,345C258.8,348.6 259.6,350.6 264,353C268.4,355.4 276.4,355 280,357C283.6,359 284,361 282,363C280,365 276.4,366.8 270,367C263.6,367.2 260,364 250,364C240,364 228.4,364.4 220,367C211.6,369.6 211.6,373 208,377C204.4,381 206.8,383.4 202,387C197.2,390.6 190.8,392.4 184,395C177.2,397.6 171.2,399 168,400"/></g>
<g fill="none" stroke="#5c9f6a" stroke-opacity=".7" stroke-width="1.6" stroke-linejoin="round"><path d="M292,140C287.7,144.7 274.7,158.5 266,168C257.3,177.5 247.7,188.3 240,197C232.3,205.7 225,212.3 220,220C215,227.7 211.7,239.2 210,243"/><path d="M278,157C276,159 272.3,162.3 266,169C259.7,175.7 247.7,188.3 240,197C232.3,205.7 224.7,215 220,221C215.3,227 213.3,231 212,233"/><path d="M0,173C2.3,173.8 9.8,176.7 14,178C18.2,179.3 23,179.2 25,181C27,182.8 24.7,186.3 26,189C27.3,191.7 31.2,193.7 33,197C34.8,200.3 35.8,206 37,209C38.2,212 39,212.7 40,215C41,217.3 43.2,220.3 43,223C42.8,225.7 38.8,228 39,231C39.2,234 41.7,238.3 44,241C46.3,243.7 52.5,245.3 53,247C53.5,248.7 50.5,249.2 47,251C43.5,252.8 33.2,255.5 32,258C30.8,260.5 36.7,263.2 40,266C43.3,268.8 48,271.5 52,275C56,278.5 60.7,283.7 64,287C67.3,290.3 69.3,292.7 72,295C74.7,297.3 77.3,298.7 80,301C82.7,303.3 84.7,307 88,309C91.3,311 95.7,312 100,313C104.3,314 110.7,316 114,315C117.3,314 117.7,307.7 120,307C122.3,306.3 125,308.3 128,311C131,313.7 134.7,319.7 138,323C141.3,326.3 144.7,327.7 148,331C151.3,334.3 155.7,338.7 158,343C160.3,347.3 161.3,353.2 162,357C162.7,360.8 164,365.3 162,366C160,366.7 154,361.8 150,361C146,360.2 142.3,360.7 138,361C133.7,361.3 128.3,363.7 124,363C119.7,362.3 115.3,358.7 112,357C108.7,355.3 106.7,353 104,353C101.3,353 98.7,355.3 96,357C93.3,358.7 88.7,360.3 88,363C87.3,365.7 91,370.3 92,373C93,375.7 92,376.7 94,379C96,381.3 102.3,385.7 104,387"/><path d="M168,400C170.7,398.5 178.7,393.2 184,391C189.3,388.8 197,389 200,387C203,385 200,380.3 202,379C204,377.7 208,379.7 212,379C216,378.3 223.3,373.7 226,375C228.7,376.3 226.3,383.7 228,387C229.7,390.3 235,395.7 236,395C237,394.3 233.3,385.3 234,383C234.7,380.7 236.7,380.3 240,381C243.3,381.7 249.7,386.3 254,387C258.3,387.7 262.7,384.3 266,385C269.3,385.7 272.7,390 274,391"/><path d="M203,45C205,44.3 209.2,41 215,41C220.8,41 233.7,42.7 238,45C242.3,47.3 239,51.8 241,55C243,58.2 248.2,61.2 250,64C251.8,66.8 250.3,69.3 252,72C253.7,74.7 257.7,77.3 260,80C262.3,82.7 264,85.7 266,88C268,90.3 271.2,91.7 272,94C272.8,96.3 272,99.5 271,102C270,104.5 268,107.3 266,109C264,110.7 261,111.7 259,112C257,112.3 255.3,112.3 254,111C252.7,109.7 252.3,106.2 251,104C249.7,101.8 247.8,100.3 246,98C244.2,95.7 241.3,93 240,90C238.7,87 239.3,83.3 238,80C236.7,76.7 233.7,73 232,70C230.3,67 229.7,64 228,62C226.3,60 223.3,57.3 222,58C220.7,58.7 221.7,64.7 220,66C218.3,67.3 214.3,67.3 212,66C209.7,64.7 207.5,60.7 206,58C204.5,55.3 203.5,52.2 203,50C202.5,47.8 203,45.8 203,45"/><path d="M1470,90C1471.2,92.3 1474.5,99.7 1477,104C1479.5,108.3 1483.2,113 1485,116C1486.8,119 1487.5,121 1488,122"/><path d="M1531,149C1532.3,151.5 1536.2,158.8 1539,164C1541.8,169.2 1546.5,177.3 1548,180"/><path d="M1535,157L1548,179"/></g>
<g fill="none" stroke="#6a6a6a" stroke-width="1.3"><path d="M1133,0C1131,6 1127,18 1123,30C1119,42 1117,47.6 1113,60C1109,72.4 1106.6,81.6 1103,92C1099.4,102.4 1099.8,104.4 1095,112C1090.2,119.6 1087,121.2 1079,130C1071,138.8 1063.4,146 1055,156C1046.6,166 1042.6,172 1037,180C1031.4,188 1030,190.4 1027,196C1024,201.6 1023,205.6 1022,208"/><path d="M1022,208C1021.8,210.4 1020,214.8 1021,220C1022,225.2 1023.4,227 1027,234C1030.6,241 1033.4,244.8 1039,255C1044.6,265.2 1048.6,271.8 1055,285C1061.4,298.2 1065.8,308.2 1071,321C1076.2,333.8 1077.8,341 1081,349C1084.2,357 1082.6,356.2 1087,361C1091.4,365.8 1095.8,367.8 1103,373C1110.2,378.2 1115,381.6 1123,387C1131,392.4 1139,397.4 1143,400"/></g>
<g fill="none" stroke="#f6bd72" stroke-width="1.8" stroke-linejoin="round" stroke-linecap="round"><path d="M290,79C290.2,81.6 289.8,88.2 291,92C292.2,95.8 295,96.8 296,98"/><path d="M350,186C352,188.4 355.2,193.6 360,198C364.8,202.4 368,202.4 374,208C380,213.6 383.6,219 390,226C396.4,233 402.8,239.6 406,243"/><path d="M334,157C335.2,159 337.2,161.8 340,167C342.8,172.2 344,177 348,183C352,189 354.8,192.2 360,197C365.2,201.8 368,201.4 374,207C380,212.6 383.2,217.4 390,225C396.8,232.6 402,238.6 408,245C414,251.4 417.2,252.2 420,257C422.8,261.8 421.4,263.4 422,269C422.6,274.6 422.2,279.8 423,285C423.8,290.2 422.6,289 426,295C429.4,301 434.8,308.2 440,315C445.2,321.8 448,323.4 452,329C456,334.6 457.6,337.4 460,343C462.4,348.6 462.4,351.8 464,357C465.6,362.2 466.6,364.6 468,369C469.4,373.4 470.2,375.4 471,379C471.8,382.6 471.8,385.4 472,387"/><path d="M1025,137L1075,137"/><path d="M1052,94C1049.8,93.8 1045.2,93 1041,93C1036.8,93 1033.6,92.2 1031,94C1028.4,95.8 1027.2,98.4 1028,102C1028.8,105.6 1034.8,107.6 1035,112C1035.2,116.4 1031,119 1029,124C1027,129 1026.6,131.4 1025,137C1023.4,142.6 1022.6,147.4 1021,152C1019.4,156.6 1020.6,156.4 1017,160C1013.4,163.6 1007.4,166 1003,170C998.6,174 997.6,175.6 995,180C992.4,184.4 991,188 990,192C989,196 990,198.4 990,200"/><path d="M1059,210L1074,210"/><path d="M1051,166C1049.4,169 1045.8,174.8 1043,181C1040.2,187.2 1038.2,193.8 1037,197"/><path d="M1043,217C1044.2,221 1047.4,231 1049,237C1050.6,243 1050.6,245 1051,247"/><circle cx="1041" cy="207" r="19"/><circle cx="1013" cy="209" r="13.6"/></g>
<g fill="none" stroke="#f28c70" stroke-width="2.1" stroke-linejoin="round" stroke-linecap="round"><path d="M199,0C200,1.2 200.2,4.2 204,6C207.8,7.8 212.8,6.2 218,9C223.2,11.8 224.8,15.6 230,20C235.2,24.4 238,27 244,31C250,35 253.6,35.8 260,40C266.4,44.2 271.2,48 276,52C280.8,56 281.4,56.4 284,60C286.6,63.6 287.8,66.2 289,70C290.2,73.8 289.8,77.2 290,79"/><path d="M296,98C299.2,102.8 305.6,112.4 312,122C318.4,131.6 322.4,137.6 328,146C333.6,154.4 336.4,158 340,164C343.6,170 344,171.6 346,176C348,180.4 349.2,184 350,186"/><path d="M512,336C510.4,337 507.2,338 504,341C500.8,344 500,347.4 496,351C492,354.6 487.6,355.8 484,359C480.4,362.2 480,363.8 478,367C476,370.2 475.2,371.8 474,375C472.8,378.2 472.4,381.4 472,383"/><path d="M472,383C474.4,383.8 479.2,384.6 484,387C488.8,389.4 492.4,392.4 496,395C499.6,397.6 500.8,399 502,400"/><path d="M472,383C471.2,385 470,389.6 468,393C466,396.4 463.2,398.6 462,400"/><path d="M512,337C513.2,335 515.6,333 518,327C520.4,321 522,314.6 524,307C526,299.4 526.4,295 528,289C529.6,283 529.6,281 532,277C534.4,273 536.4,272.2 540,269C543.6,265.8 546.4,265.4 550,261C553.6,256.6 553.6,251.8 558,247C562.4,242.2 567.2,241 572,237C576.8,233 578.8,231.4 582,227C585.2,222.6 584.4,220.6 588,215C591.6,209.4 596,205.4 600,199C604,192.6 604.8,188 608,183C611.2,178 612.4,176.8 616,174C619.6,171.2 621.2,169.1 626,169C630.8,168.9 635.2,172.6 640,173.4C644.8,174.2 646,171.3 650,173C654,174.7 656,178.2 660,182C664,185.8 667.2,188.4 670,192C672.8,195.6 671.6,197 674,200C676.4,203 678,204.8 682,207C686,209.2 690.4,210.3 694,211C697.6,211.7 697.4,210 700,210.4C702.6,210.8 701.8,214 707,213C712.2,212 719.8,207.2 726,205.6C732.2,204 731.2,206.7 738,205C744.8,203.3 749.2,201.2 760,197C770.8,192.8 783.2,187.2 792,184C800.8,180.8 798.8,181.8 804,181C809.2,180.2 813.6,180.7 818,180C822.4,179.3 822.8,178.1 826,177.6C829.2,177.1 829.6,176.3 834,177.6C838.4,178.9 842.4,180.5 848,184C853.6,187.5 857.6,192.3 862,195C866.4,197.7 865.6,197 870,197.6C874.4,198.2 879.6,196.9 884,198C888.4,199.1 889.2,203 892,203C894.8,203 895,199.6 898,198C901,196.4 903.8,195 907,195C910.2,195 910.8,198.3 914,198C917.2,197.7 919.4,193.7 923,193.6C926.6,193.5 926.2,196.3 932,197.6C937.8,198.9 942.8,199.8 952,200C961.2,200.2 972,198.5 978,198.4C984,198.3 981.2,199.2 982,199.4"/><path d="M668,400C669.6,397.4 673.2,390.4 676,387C678.8,383.6 678.4,385.8 682,383C685.6,380.2 690,377.4 694,373C698,368.6 698.4,364.2 702,361C705.6,357.8 709.2,360.2 712,357C714.8,353.8 714,349.4 716,345C718,340.6 720.6,339 722,335C723.4,331 721.8,328.2 723,325C724.2,321.8 723.8,320.3 728,319C732.2,317.7 737.2,317.8 744,318.6C750.8,319.4 756,321.9 762,323C768,324.1 768.8,324 774,324C779.2,324 782,324.6 788,323C794,321.4 798.6,316.8 804,316C809.4,315.2 809.4,319.8 815,319C820.6,318.2 823,315 832,312C841,309 850.8,304.4 860,304C869.2,303.6 870.4,309.8 878,310C885.6,310.2 888.8,305.9 898,305C907.2,304.1 916.4,306.2 924,305.4C931.6,304.6 932.4,303.5 936,301C939.6,298.5 940.6,297.4 942,293C943.4,288.6 941.4,284.2 943,279C944.6,273.8 947.4,270.6 950,267C952.6,263.4 953.8,262.2 956,261C958.2,259.8 958.6,260 961,261C963.4,262 964.6,265 968,266C971.4,267 976,266.2 978,266.2"/><path d="M1037,0C1038.2,2.8 1041,9.6 1043,14C1045,18.4 1045.6,18.4 1047,22C1048.4,25.6 1049.2,24.4 1050,32C1050.8,39.6 1050.6,50.8 1051,60C1051.4,69.2 1051.6,71.2 1052,78C1052.4,84.8 1053,87.2 1053,94C1053,100.8 1052.8,103.6 1052,112C1051.2,120.4 1050.2,127.2 1049,136C1047.8,144.8 1046.8,150 1046,156C1045.2,162 1045.2,164 1045,166"/><path d="M1041,26C1042.2,25 1044.6,23.8 1047,21C1049.4,18.2 1049.8,15 1053,12C1056.2,9 1057.8,8.4 1063,6C1068.2,3.6 1075.8,1.2 1079,0"/><path d="M1139,0C1142.2,0.6 1149.8,1.4 1155,3C1160.2,4.6 1160.8,4.2 1165,8C1169.2,11.8 1170.8,16.2 1176,22C1181.2,27.8 1186.2,31.8 1191,37C1195.8,42.2 1197.8,43.4 1200,48C1202.2,52.6 1201.6,52 1202,60C1202.4,68 1201.8,79.2 1202,88C1202.2,96.8 1202.8,100.8 1203,104"/><path d="M1203,0C1201.8,1.6 1202.4,3.6 1197,8C1191.6,12.4 1184.4,14.8 1176,22C1167.6,29.2 1163.6,34.8 1155,44C1146.4,53.2 1142.6,57.2 1133,68C1123.4,78.8 1116.2,87.2 1107,98C1097.8,108.8 1093.4,114.2 1087,122C1080.6,129.8 1079.8,131 1075,137C1070.2,143 1067.8,145.8 1063,152C1058.2,158.2 1054.6,165.2 1051,168C1047.4,170.8 1046.2,166.4 1045,166"/><path d="M1075,137C1079.8,136 1089,134 1099,132C1109,130 1114.2,129.2 1125,127C1135.8,124.8 1142.2,123.3 1153,121C1163.8,118.7 1169,119 1179,115.6C1189,112.2 1191.8,109.3 1203,104C1214.2,98.7 1219.8,94 1235,89C1250.2,84 1261.4,84.4 1279,79C1296.6,73.6 1307,68.6 1323,62C1339,55.4 1343.8,51.2 1359,46C1374.2,40.8 1382.2,39 1399,36C1415.8,33 1431.8,34.2 1443,31C1454.2,27.8 1452.6,22.2 1455,20"/><path d="M1455,22L1481,0"/><path d="M943,200C946.6,199.9 953.8,200 961,199.6C968.2,199.2 974.6,197.7 979,198C983.4,198.3 982.6,199 983,201C983.4,203 980.6,206.6 981,208C981.4,209.4 983.6,209.8 985,208C986.4,206.2 984.8,200.6 988,199C991.2,197.4 996.8,200.4 1001,200C1005.2,199.6 1005.4,199 1009,197C1012.6,195 1014.2,192.6 1019,190C1023.8,187.4 1028.6,187.6 1033,184C1037.4,180.4 1038.6,175.6 1041,172C1043.4,168.4 1044.2,167.2 1045,166"/><path d="M1045,166C1047,166.8 1051,167.2 1055,170C1059,172.8 1061.8,175.6 1065,180C1068.2,184.4 1069.2,186.8 1071,192C1072.8,197.2 1073.6,200.4 1074,206C1074.4,211.6 1073.6,214.8 1073,220C1072.4,225.2 1073,228 1071,232C1069,236 1067,237 1063,240C1059,243 1056.2,245.3 1051,247C1045.8,248.7 1042.2,248.8 1037,248.6C1031.8,248.4 1030.6,245.1 1025,246C1019.4,246.9 1014.6,250 1009,253C1003.4,256 1001.8,258.4 997,261C992.2,263.6 991,265 985,266C979,267 971.8,267 967,266C962.2,265 963.4,262 961,261C958.6,260 957.4,259.4 955,261C952.6,262.6 951.4,265.4 949,269C946.6,272.6 944.2,277 943,279"/><path d="M1074,210C1079.8,211 1089.2,212.6 1103,215C1116.8,217.4 1129.4,219.8 1143,222C1156.6,224.2 1159,224.2 1171,226C1183,227.8 1189.8,229 1203,231C1216.2,233 1228.2,234.4 1237,236C1245.8,237.6 1231.8,233.2 1247,239C1262.2,244.8 1289.8,253.8 1313,265C1336.2,276.2 1345,284.6 1363,295C1381,305.4 1390.2,310.2 1403,317C1415.8,323.8 1419.8,326.1 1427,329C1434.2,331.9 1433.4,330.6 1439,331.4C1444.6,332.2 1451.8,332.7 1455,333"/><path d="M1171,226C1171.1,232.2 1171.6,245.6 1171.6,257C1171.6,268.4 1171.3,276.4 1171,283C1170.7,289.6 1172.4,286.6 1170,290C1167.6,293.4 1163.6,296.2 1159,300C1154.4,303.8 1152.2,304.8 1147,309C1141.8,313.2 1138.2,316.2 1133,321C1127.8,325.8 1125,329.4 1121,333C1117,336.6 1116.6,337 1113,339C1109.4,341 1106.6,341.6 1103,343C1099.4,344.4 1098.8,343.6 1095,346C1091.2,348.4 1086.2,353.2 1084,355"/><path d="M1051,247C1051.6,250.6 1052.6,257.4 1054,265C1055.4,272.6 1055.4,275.4 1058,285C1060.6,294.6 1063.2,302.6 1067,313C1070.8,323.4 1073.6,328.6 1077,337C1080.4,345.4 1080.8,349 1084,355C1087.2,361 1089.8,362.6 1093,367C1096.2,371.4 1097.6,373 1100,377C1102.4,381 1102.6,382.4 1105,387C1107.4,391.6 1110.6,397.4 1112,400"/><path d="M1455,333C1465,334.4 1485.8,337.6 1505,340C1524.2,342.4 1537,342.6 1551,345C1565,347.4 1566.2,349.8 1575,352C1583.8,354.2 1583,355.4 1595,356C1607,356.6 1615,355.6 1635,355C1655,354.4 1673,353.9 1695,353C1717,352.1 1731.8,351.1 1745,350.6C1758.2,350.1 1751.8,349.7 1761,350.6C1770.2,351.5 1782.6,353.1 1791,355C1799.4,356.9 1799.2,359.4 1803,360C1806.8,360.6 1808,359.2 1810,358C1812,356.8 1810,355.2 1813,354C1816,352.8 1816.6,351.6 1825,352C1833.4,352.4 1844.2,354.6 1855,356C1865.8,357.4 1871.8,357.6 1879,359C1886.2,360.4 1885.4,359 1891,363C1896.6,367 1900.6,372.6 1907,379C1913.4,385.4 1918.2,390.8 1923,395C1927.8,399.2 1929.4,399 1931,400"/></g>
<path transform="translate(1080 110) scale(.55)" d="M0,-11 C1.500,-11 2,-9 2,-7 L2,-3 L11,3 L11,5.500 L2,2.500 L2,7 L5,9.500 L5,11 L0,9.800 L-5,11 L-5,9.500 L-2,7 L-2,2.500 L-11,5.500 L-11,3 L-2,-3 L-2,-7 C-2,-9 -1.500,-11 0,-11Z" fill="#8461c4"/>
<g stroke="#fff" stroke-opacity=".75" stroke-width="2.2" stroke-linejoin="round" paint-order="stroke" style="paint-order:stroke"><text x="181" y="20" font-size="10.5" fill="#2b2b2b" textLength="64" lengthAdjust="spacingAndGlyphs">Şarkikaraağaç</text><text x="158" y="75" font-size="10" fill="#93689c" font-style="italic" textLength="63.5" lengthAdjust="spacingAndGlyphs">Şarkikaraağaç</text><text x="366.4" y="135.4" font-size="10.5" fill="#2b2b2b" textLength="29.6" lengthAdjust="spacingAndGlyphs">Hüyük</text><text x="375" y="167.6" font-size="10" fill="#93689c" font-style="italic" textLength="27" lengthAdjust="spacingAndGlyphs">Hüyük</text><text x="9" y="278.6" font-size="10.5" fill="#2b2b2b" text-anchor="end">Aksu</text><text x="79" y="359.4" font-size="10" fill="#93689c" font-style="italic" textLength="20" lengthAdjust="spacingAndGlyphs">Aksu</text><text x="171" y="299.4" font-size="10" fill="#93689c" font-style="italic" textLength="67.4" lengthAdjust="spacingAndGlyphs">Yenişarbademli</text><text x="193" y="363" font-size="10.5" fill="#2b2b2b" textLength="72" lengthAdjust="spacingAndGlyphs">Yenişarbademli</text><text x="259" y="299.4" font-size="14.5" fill="#6a8bc4" font-style="italic" textLength="81" lengthAdjust="spacingAndGlyphs">Göller Yöresi</text><text x="366" y="344" font-size="14" fill="#0f8a0f" font-style="italic" textLength="54.6" lengthAdjust="spacingAndGlyphs" text-anchor="middle">Beyşehir</text><text x="366" y="361.4" font-size="14" fill="#0f8a0f" font-style="italic" textLength="61.4" lengthAdjust="spacingAndGlyphs" text-anchor="middle">Gölü Millî</text><text x="366" y="379" font-size="14" fill="#0f8a0f" font-style="italic" textLength="33" lengthAdjust="spacingAndGlyphs" text-anchor="middle">Parkı</text><text x="438" y="345.4" font-size="10" fill="#93689c" font-style="italic" textLength="36" lengthAdjust="spacingAndGlyphs">Beyşehir</text><text x="456" y="392.6" font-size="10.5" fill="#2b2b2b" textLength="39" lengthAdjust="spacingAndGlyphs">Beyşehir</text><text x="668" y="80.6" font-size="10.5" fill="#2b2b2b" textLength="38" lengthAdjust="spacingAndGlyphs">Derbent</text><text x="649" y="98.6" font-size="10" fill="#93689c" font-style="italic" textLength="35" lengthAdjust="spacingAndGlyphs">Derbent</text><text x="913" y="371.4" font-size="10" fill="#93689c" font-style="italic" textLength="30" lengthAdjust="spacingAndGlyphs">Meram</text><text x="1013" y="212.4" font-size="13.5" fill="#2b2b2b" textLength="40" lengthAdjust="spacingAndGlyphs">Konya</text><text x="1396" y="54" font-size="10.5" fill="#0f8a0f" font-style="italic" textLength="75" lengthAdjust="spacingAndGlyphs" text-anchor="middle">Konya Bozdağ</text><text x="1396" y="68" font-size="10.5" fill="#0f8a0f" font-style="italic" textLength="32" lengthAdjust="spacingAndGlyphs" text-anchor="middle">Yaban</text><text x="1396" y="82.4" font-size="10.5" fill="#0f8a0f" font-style="italic" textLength="34" lengthAdjust="spacingAndGlyphs" text-anchor="middle">Hayatı</text><text x="1396" y="96.6" font-size="10.5" fill="#0f8a0f" font-style="italic" textLength="53" lengthAdjust="spacingAndGlyphs" text-anchor="middle">Geliştirme</text><text x="1396" y="111" font-size="10.5" fill="#0f8a0f" font-style="italic" textLength="34" lengthAdjust="spacingAndGlyphs" text-anchor="middle">Sahası</text><text x="1360" y="132.6" font-size="10" fill="#93689c" font-style="italic" textLength="35" lengthAdjust="spacingAndGlyphs">Karatay</text><text x="1083" y="1.6" font-size="10" fill="#93689c" font-style="italic" textLength="36" lengthAdjust="spacingAndGlyphs">Selçuklu</text><text x="1938.5" y="140" font-size="10" fill="#93689c" font-style="italic" textLength="39.5" lengthAdjust="spacingAndGlyphs">Emirgazi</text><text x="1991" y="183.4" font-size="10.5" fill="#2b2b2b" textLength="40.6" lengthAdjust="spacingAndGlyphs">Emirgazi</text><text x="1754" y="336.6" font-size="10" fill="#93689c" font-style="italic" textLength="43" lengthAdjust="spacingAndGlyphs">Karapınar</text><text x="1779" y="353.6" font-size="10.5" fill="#2b2b2b" textLength="45" lengthAdjust="spacingAndGlyphs">Karapınar</text></g>
<g><rect x="10" y="10" width="34" height="65" rx="4" fill="#000" fill-opacity=".2"/><rect x="12" y="12" width="30" height="61" rx="2" fill="#fff"/><path d="M12 42.500H42" stroke="#ccc" stroke-width="1"/><path d="M21 29H33.600M27.300 22.700V35.300M21.600 58.400H33" stroke="#000" stroke-width="2.600"/></g>
<g><rect x="1909" y="383" width="237" height="17" fill="#fff" fill-opacity=".8"/><rect x="1914" y="387.300" width="12" height="4" fill="#4c7be1"/><rect x="1914" y="391.300" width="12" height="4" fill="#ffd500"/><text y="395.400" font-size="12" fill="#333"><tspan x="1929" fill="#0078a8">Leaflet</tspan><tspan x="1969.300">|</tspan><tspan x="1974.700">©</tspan><tspan x="1987.700" fill="#0078a8">OpenStreetMap</tspan><tspan x="2076" textLength="64.400" lengthAdjust="spacingAndGlyphs">contributors</tspan></text></g>
</svg>
  </div>
</div>

<!-- FOOTER -->
<div id="ftr">
  <div class="abs" style="right:24px;top:15px;font-size:14px;line-height:16px;color:#1f1f1f;white-space:nowrap">Powered by <b>ZENOSMART</b></div>
</div>
</div>
</body>
</html>
